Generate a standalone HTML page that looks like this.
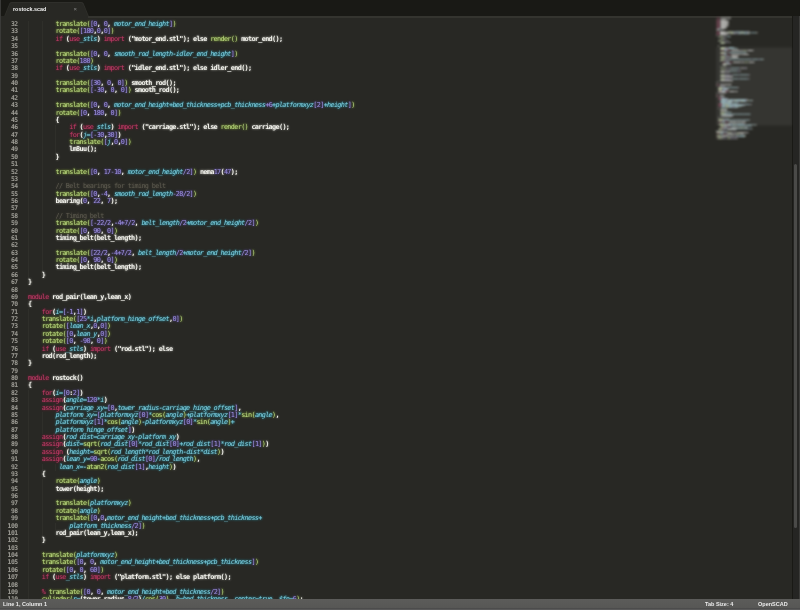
<!DOCTYPE html><html><head><meta charset="utf-8"><style>
*{margin:0;padding:0}
html,body{width:800px;height:610px;overflow:hidden;background:#191915}
body{position:relative;font-family:"Liberation Mono"}
#ed{position:absolute;left:0;top:16px;width:792px;height:583px;background:#282824;overflow:hidden}
#code{will-change:transform;font-weight:normal;letter-spacing:-0.6550px;position:absolute;left:27.7px;top:5.300000000000001px;font-size:6.8px;line-height:7.378px;white-space:pre;color:#f2f2ec}
#code2{will-change:transform;font-weight:normal;letter-spacing:-0.6550px;position:absolute;left:27.7px;top:5.300000000000001px;font-size:6.8px;line-height:7.378px;white-space:pre;color:#f2f2ec}
.glow{filter:blur(1px);opacity:1.0}
#nums{will-change:transform;font-weight:bold;letter-spacing:-0.4150px;position:absolute;left:0;width:17.8px;text-align:right;top:5.300000000000001px;font-size:6.4px;line-height:7.378px;white-space:pre;color:#9e9d96}
.fn{color:#bcdc84} .kw{color:#c03c68} .num{color:#9c90e0} .var{color:#80d0e0;font-style:italic} .txt{color:#f2f2ec} .com{color:#5e5b50} .str_{color:#f2f2ec}
.glow .fn{color:#a0c838} .glow .kw{color:#981840} .glow .num{color:#6850c8} .glow .var{color:#20b0d0} .glow .txt{color:#d8d8d0} .glow .com{color:#48463a} .glow .str_{color:#d8d8d0}
#code2 .txt,#code2 .str_{font-weight:bold}
#mm rect[class]{fill-opacity:1.0} .mfn{fill:#bcdc84} .mkw{fill:#c03c68} .mnum{fill:#9c90e0} .mvar{fill:#80d0e0} .mtxt{fill:#f2f2ec} .mcom{fill:#5e5b50} .mstr_{fill:#f2f2ec}

.guide{position:absolute;width:1px;background:#2f2f2a}
#status{will-change:transform;position:absolute;left:0;top:599px;width:800px;height:11px;background:linear-gradient(#5c5c5a 0%,#575755 80%,#4c4c4c 82%,#4c4c4c 88%,#5a5a5a 92%);color:#ececec;font-weight:bold;font-family:"Liberation Sans";font-size:5.5px;line-height:10.5px}
#sb{position:absolute;left:792.5px;top:16px;width:7.5px;height:583px;background:#252523;border-right:1.3px solid #3c3c3a;box-sizing:border-box}
#thumb{position:absolute;left:793.5px;top:164px;width:3.2px;height:364px;background:#4a4a48;border-radius:1.6px}
</style></head><body>
<svg style="position:absolute;left:0;top:0;will-change:transform" width="800" height="17"><path d="M4.5 17 L10 3 Q11 2.5 12 2.5 L81 2.5 Q82 2.5 83 3 L88.5 17 Z" fill="#282824"/><path d="M4.5 16.5 L10 3 Q11 2.5 12 2.5 L81 2.5 Q82 2.5 83 3 L88.5 16.5" fill="none" stroke="#363632" stroke-width="0.7"/>
<text x="13" y="11" font-family="Liberation Sans" font-weight="bold" font-size="5.4" fill="#f2f2f2">rostock.scad</text>
<text x="73.5" y="11" font-family="Liberation Sans" font-size="6" fill="#888">×</text></svg>
<div id="ed"><div style="position:absolute;left:88px;top:0;width:712px;height:1.5px;background:#34342f"></div><div class="guide" style="left:28.00px;top:5.30px;height:258.23px"></div><div class="guide" style="left:28.00px;top:293.04px;height:51.65px"></div><div class="guide" style="left:28.00px;top:374.20px;height:213.96px"></div><div class="guide" style="left:41.70px;top:5.30px;height:250.85px"></div><div class="guide" style="left:41.70px;top:396.33px;height:22.13px"></div><div class="guide" style="left:41.70px;top:447.98px;height:7.38px"></div><div class="guide" style="left:41.70px;top:462.74px;height:59.02px"></div><div class="guide" style="left:55.40px;top:108.59px;height:29.51px"></div><div class="guide" style="left:55.40px;top:447.98px;height:7.38px"></div><div class="guide" style="left:55.40px;top:507.00px;height:7.38px"></div><pre id="nums">32
33
34
35
36
37
38
39
40
41
42
43
44
45
46
47
48
49
50
51
52
53
54
55
56
57
58
59
60
61
62
63
64
65
66
67
68
69
70
71
72
73
74
75
76
77
78
79
80
81
82
83
84
85
86
87
88
89
90
91
92
93
94
95
96
97
98
99
100
101
102
103
104
105
106
107
108
109
110</pre><pre id="code" class="glow">        <span class="fn">translate</span><span class="fn">(</span><span class="num">[</span><span class="num">0</span><span class="txt">,</span> <span class="num">0</span><span class="txt">,</span> <span class="var">motor_end_height</span><span class="num">]</span><span class="fn">)</span>
        <span class="fn">rotate</span><span class="fn">(</span><span class="num">[</span><span class="num">180</span><span class="txt">,</span><span class="num">0</span><span class="txt">,</span><span class="num">0</span><span class="num">]</span><span class="fn">)</span>
        <span class="kw">if</span> <span class="txt">(</span><span class="kw">use</span><span class="var">_stls</span><span class="txt">)</span> <span class="kw">import</span> <span class="txt">(</span><span class="str_">&quot;motor_end.stl&quot;</span><span class="txt">)</span><span class="txt">;</span> <span class="txt">else</span> <span class="fn">render</span><span class="fn">(</span><span class="fn">)</span> <span class="txt">motor_end</span><span class="txt">(</span><span class="txt">)</span><span class="txt">;</span>

        <span class="fn">translate</span><span class="fn">(</span><span class="num">[</span><span class="num">0</span><span class="txt">,</span> <span class="num">0</span><span class="txt">,</span> <span class="var">smooth_rod_length</span><span class="var">-</span><span class="var">idler_end_height</span><span class="num">]</span><span class="fn">)</span>
        <span class="fn">rotate</span><span class="fn">(</span><span class="num">180</span><span class="fn">)</span>
        <span class="kw">if</span> <span class="txt">(</span><span class="kw">use</span><span class="var">_stls</span><span class="txt">)</span> <span class="kw">import</span> <span class="txt">(</span><span class="str_">&quot;idler_end.stl&quot;</span><span class="txt">)</span><span class="txt">;</span> <span class="txt">else</span> <span class="txt">idler_end</span><span class="txt">(</span><span class="txt">)</span><span class="txt">;</span>

        <span class="fn">translate</span><span class="fn">(</span><span class="num">[</span><span class="num">30</span><span class="txt">,</span> <span class="num">0</span><span class="txt">,</span> <span class="num">0</span><span class="num">]</span><span class="fn">)</span> <span class="txt">smooth_rod</span><span class="txt">(</span><span class="txt">)</span><span class="txt">;</span>
        <span class="fn">translate</span><span class="fn">(</span><span class="num">[</span><span class="num">-</span><span class="num">30</span><span class="txt">,</span> <span class="num">0</span><span class="txt">,</span> <span class="num">0</span><span class="num">]</span><span class="fn">)</span> <span class="txt">smooth_rod</span><span class="txt">(</span><span class="txt">)</span><span class="txt">;</span>

        <span class="fn">translate</span><span class="fn">(</span><span class="num">[</span><span class="num">0</span><span class="txt">,</span> <span class="num">0</span><span class="txt">,</span> <span class="var">motor_end_height</span><span class="var">+</span><span class="var">bed_thickness</span><span class="var">+</span><span class="var">pcb_thickness</span><span class="num">+</span><span class="num">6</span><span class="var">+</span><span class="var">platformxyz</span><span class="num">[</span><span class="num">2</span><span class="num">]</span><span class="var">+</span><span class="var">height</span><span class="num">]</span><span class="fn">)</span>
        <span class="fn">rotate</span><span class="fn">(</span><span class="num">[</span><span class="num">0</span><span class="txt">,</span> <span class="num">180</span><span class="txt">,</span> <span class="num">0</span><span class="num">]</span><span class="fn">)</span>
        <span class="txt">{</span>
            <span class="kw">if</span> <span class="txt">(</span><span class="kw">use</span><span class="var">_stls</span><span class="txt">)</span> <span class="kw">import</span> <span class="txt">(</span><span class="str_">&quot;carriage.stl&quot;</span><span class="txt">)</span><span class="txt">;</span> <span class="txt">else</span> <span class="fn">render</span><span class="fn">(</span><span class="fn">)</span> <span class="txt">carriage</span><span class="txt">(</span><span class="txt">)</span><span class="txt">;</span>
            <span class="kw">for</span><span class="txt">(</span><span class="var">j</span><span class="var">=</span><span class="num">[</span><span class="num">-</span><span class="num">30</span><span class="txt">,</span><span class="num">30</span><span class="num">]</span><span class="txt">)</span>
            <span class="fn">translate</span><span class="fn">(</span><span class="num">[</span><span class="var">j</span><span class="txt">,</span><span class="num">0</span><span class="txt">,</span><span class="num">0</span><span class="num">]</span><span class="fn">)</span>
            <span class="txt">lm8uu</span><span class="txt">(</span><span class="txt">)</span><span class="txt">;</span>
        <span class="txt">}</span>

        <span class="fn">translate</span><span class="fn">(</span><span class="num">[</span><span class="num">0</span><span class="txt">,</span> <span class="num">17</span><span class="num">-</span><span class="num">10</span><span class="txt">,</span> <span class="var">motor_end_height</span><span class="num">/</span><span class="num">2</span><span class="num">]</span><span class="fn">)</span> <span class="txt">nema</span><span class="num">17</span><span class="txt">(</span><span class="num">47</span><span class="txt">)</span><span class="txt">;</span>

        <span class="com">// Belt bearings for timing belt</span>
        <span class="fn">translate</span><span class="fn">(</span><span class="num">[</span><span class="num">0</span><span class="txt">,</span><span class="num">-</span><span class="num">4</span><span class="txt">,</span> <span class="var">smooth_rod_length</span><span class="num">-</span><span class="num">28</span><span class="num">/</span><span class="num">2</span><span class="num">]</span><span class="fn">)</span>
        <span class="txt">bearing</span><span class="txt">(</span><span class="num">0</span><span class="txt">,</span> <span class="num">22</span><span class="txt">,</span> <span class="num">7</span><span class="txt">)</span><span class="txt">;</span>

        <span class="com">// Timing belt</span>
        <span class="fn">translate</span><span class="fn">(</span><span class="num">[</span><span class="num">-</span><span class="num">22</span><span class="num">/</span><span class="num">2</span><span class="txt">,</span><span class="num">-</span><span class="num">4</span><span class="num">+</span><span class="num">7</span><span class="num">/</span><span class="num">2</span><span class="txt">,</span> <span class="var">belt_length</span><span class="num">/</span><span class="num">2</span><span class="var">+</span><span class="var">motor_end_height</span><span class="num">/</span><span class="num">2</span><span class="num">]</span><span class="fn">)</span>
        <span class="fn">rotate</span><span class="fn">(</span><span class="num">[</span><span class="num">0</span><span class="txt">,</span> <span class="num">90</span><span class="txt">,</span> <span class="num">0</span><span class="num">]</span><span class="fn">)</span>
        <span class="txt">timing_belt</span><span class="txt">(</span><span class="txt">belt_length</span><span class="txt">)</span><span class="txt">;</span>

        <span class="fn">translate</span><span class="fn">(</span><span class="num">[</span><span class="num">22</span><span class="num">/</span><span class="num">2</span><span class="txt">,</span><span class="num">-</span><span class="num">4</span><span class="num">+</span><span class="num">7</span><span class="num">/</span><span class="num">2</span><span class="txt">,</span> <span class="var">belt_length</span><span class="num">/</span><span class="num">2</span><span class="var">+</span><span class="var">motor_end_height</span><span class="num">/</span><span class="num">2</span><span class="num">]</span><span class="fn">)</span>
        <span class="fn">rotate</span><span class="fn">(</span><span class="num">[</span><span class="num">0</span><span class="txt">,</span> <span class="num">90</span><span class="txt">,</span> <span class="num">0</span><span class="num">]</span><span class="fn">)</span>
        <span class="txt">timing_belt</span><span class="txt">(</span><span class="txt">belt_length</span><span class="txt">)</span><span class="txt">;</span>
    <span class="txt">}</span>
<span class="txt">}</span>

<span class="kw">module</span> <span class="txt">rod_pair</span><span class="txt">(</span><span class="txt">lean_y</span><span class="txt">,</span><span class="txt">lean_x</span><span class="txt">)</span>
<span class="txt">{</span>
    <span class="kw">for</span><span class="txt">(</span><span class="var">i</span><span class="var">=</span><span class="num">[</span><span class="num">-</span><span class="num">1</span><span class="txt">,</span><span class="num">1</span><span class="num">]</span><span class="txt">)</span>
    <span class="fn">translate</span><span class="fn">(</span><span class="num">[</span><span class="num">25</span><span class="var">*</span><span class="var">i</span><span class="txt">,</span><span class="var">platform_hinge_offset</span><span class="txt">,</span><span class="num">0</span><span class="num">]</span><span class="fn">)</span>
    <span class="fn">rotate</span><span class="fn">(</span><span class="num">[</span><span class="var">lean_x</span><span class="txt">,</span><span class="num">0</span><span class="txt">,</span><span class="num">0</span><span class="num">]</span><span class="fn">)</span>
    <span class="fn">rotate</span><span class="fn">(</span><span class="num">[</span><span class="num">0</span><span class="txt">,</span><span class="var">lean_y</span><span class="txt">,</span><span class="num">0</span><span class="num">]</span><span class="fn">)</span>
    <span class="fn">rotate</span><span class="fn">(</span><span class="num">[</span><span class="num">0</span><span class="txt">,</span> <span class="num">-</span><span class="num">90</span><span class="txt">,</span> <span class="num">0</span><span class="num">]</span><span class="fn">)</span>
    <span class="kw">if</span> <span class="txt">(</span><span class="kw">use</span><span class="var">_stls</span><span class="txt">)</span> <span class="kw">import</span> <span class="txt">(</span><span class="str_">&quot;rod.stl&quot;</span><span class="txt">)</span><span class="txt">;</span> <span class="txt">else</span>
    <span class="txt">rod</span><span class="txt">(</span><span class="txt">rod_length</span><span class="txt">)</span><span class="txt">;</span>
<span class="txt">}</span>

<span class="kw">module</span> <span class="txt">rostock</span><span class="txt">(</span><span class="txt">)</span>
<span class="txt">{</span>
    <span class="kw">for</span><span class="txt">(</span><span class="var">i</span><span class="var">=</span><span class="num">[</span><span class="num">0</span><span class="txt">:</span><span class="num">2</span><span class="num">]</span><span class="txt">)</span>
    <span class="kw">assign</span><span class="txt">(</span><span class="var">angle</span><span class="var">=</span><span class="num">120</span><span class="var">*</span><span class="var">i</span><span class="txt">)</span>
    <span class="kw">assign</span><span class="txt">(</span><span class="var">carriage_xy</span><span class="var">=</span><span class="num">[</span><span class="num">0</span><span class="txt">,</span><span class="var">tower_radius</span><span class="var">-</span><span class="var">carriage_hinge_offset</span><span class="num">]</span><span class="txt">,</span>
        <span class="var">platform_xy</span><span class="var">=</span><span class="num">[</span><span class="var">platformxyz</span><span class="num">[</span><span class="num">0</span><span class="num">]</span><span class="var">*</span><span class="fn">cos</span><span class="fn">(</span><span class="var">angle</span><span class="fn">)</span><span class="var">+</span><span class="var">platformxyz</span><span class="num">[</span><span class="num">1</span><span class="num">]</span><span class="var">*</span><span class="fn">sin</span><span class="fn">(</span><span class="var">angle</span><span class="fn">)</span><span class="txt">,</span>
        <span class="var">platformxyz</span><span class="num">[</span><span class="num">1</span><span class="num">]</span><span class="var">*</span><span class="fn">cos</span><span class="fn">(</span><span class="var">angle</span><span class="fn">)</span><span class="var">-</span><span class="var">platformxyz</span><span class="num">[</span><span class="num">0</span><span class="num">]</span><span class="var">*</span><span class="fn">sin</span><span class="fn">(</span><span class="var">angle</span><span class="fn">)</span><span class="var">+</span>
        <span class="var">platform_hinge_offset</span><span class="num">]</span><span class="txt">)</span>
    <span class="kw">assign</span><span class="txt">(</span><span class="var">rod_dist</span><span class="var">=</span><span class="var">carriage_xy</span><span class="var">-</span><span class="var">platform_xy</span><span class="txt">)</span>
    <span class="kw">assign</span><span class="txt">(</span><span class="var">dist</span><span class="var">=</span><span class="fn">sqrt</span><span class="fn">(</span><span class="var">rod_dist</span><span class="num">[</span><span class="num">0</span><span class="num">]</span><span class="var">*</span><span class="var">rod_dist</span><span class="num">[</span><span class="num">0</span><span class="num">]</span><span class="var">+</span><span class="var">rod_dist</span><span class="num">[</span><span class="num">1</span><span class="num">]</span><span class="var">*</span><span class="var">rod_dist</span><span class="num">[</span><span class="num">1</span><span class="num">]</span><span class="fn">)</span><span class="txt">)</span>
    <span class="kw">assign</span> <span class="txt">(</span><span class="var">height</span><span class="var">=</span><span class="fn">sqrt</span><span class="fn">(</span><span class="var">rod_length</span><span class="var">*</span><span class="var">rod_length</span><span class="var">-</span><span class="var">dist</span><span class="var">*</span><span class="var">dist</span><span class="fn">)</span><span class="txt">)</span>
    <span class="kw">assign</span><span class="txt">(</span><span class="var">lean_y</span><span class="var">=</span><span class="num">90</span><span class="var">-</span><span class="fn">acos</span><span class="fn">(</span><span class="var">rod_dist</span><span class="num">[</span><span class="num">0</span><span class="num">]</span><span class="var">/</span><span class="var">rod_length</span><span class="fn">)</span><span class="txt">,</span>
         <span class="var">lean_x</span><span class="var">=</span><span class="var">-</span><span class="fn">atan2</span><span class="fn">(</span><span class="var">rod_dist</span><span class="num">[</span><span class="num">1</span><span class="num">]</span><span class="txt">,</span><span class="var">height</span><span class="fn">)</span><span class="txt">)</span>
    <span class="txt">{</span>
        <span class="fn">rotate</span><span class="fn">(</span><span class="var">angle</span><span class="fn">)</span>
        <span class="txt">tower</span><span class="txt">(</span><span class="txt">height</span><span class="txt">)</span><span class="txt">;</span>

        <span class="fn">translate</span><span class="fn">(</span><span class="var">platformxyz</span><span class="fn">)</span>
        <span class="fn">rotate</span><span class="fn">(</span><span class="var">angle</span><span class="fn">)</span>
        <span class="fn">translate</span><span class="fn">(</span><span class="num">[</span><span class="num">0</span><span class="txt">,</span><span class="num">0</span><span class="txt">,</span><span class="var">motor_end_height</span><span class="var">+</span><span class="var">bed_thickness</span><span class="var">+</span><span class="var">pcb_thickness</span><span class="var">+</span>
            <span class="var">platform_thickness</span><span class="num">/</span><span class="num">2</span><span class="num">]</span><span class="fn">)</span>
        <span class="txt">rod_pair</span><span class="txt">(</span><span class="txt">lean_y</span><span class="txt">,</span><span class="txt">lean_x</span><span class="txt">)</span><span class="txt">;</span>
    <span class="txt">}</span>

    <span class="fn">translate</span><span class="fn">(</span><span class="var">platformxyz</span><span class="fn">)</span>
    <span class="fn">translate</span><span class="fn">(</span><span class="num">[</span><span class="num">0</span><span class="txt">,</span> <span class="num">0</span><span class="txt">,</span> <span class="var">motor_end_height</span><span class="var">+</span><span class="var">bed_thickness</span><span class="var">+</span><span class="var">pcb_thickness</span><span class="num">]</span><span class="fn">)</span>
    <span class="fn">rotate</span><span class="fn">(</span><span class="num">[</span><span class="num">0</span><span class="txt">,</span> <span class="num">0</span><span class="txt">,</span> <span class="num">60</span><span class="num">]</span><span class="fn">)</span>
    <span class="kw">if</span> <span class="txt">(</span><span class="kw">use</span><span class="var">_stls</span><span class="txt">)</span> <span class="kw">import</span> <span class="txt">(</span><span class="str_">&quot;platform.stl&quot;</span><span class="txt">)</span><span class="txt">;</span> <span class="txt">else</span> <span class="txt">platform</span><span class="txt">(</span><span class="txt">)</span><span class="txt">;</span>

    <span class="kw">%</span> <span class="fn">translate</span><span class="fn">(</span><span class="num">[</span><span class="num">0</span><span class="txt">,</span> <span class="num">0</span><span class="txt">,</span> <span class="var">motor_end_height</span><span class="var">+</span><span class="var">bed_thickness</span><span class="num">/</span><span class="num">2</span><span class="num">]</span><span class="fn">)</span>
    <span class="fn">cylinder</span><span class="fn">(</span><span class="var">r</span><span class="var">=</span><span class="txt">(</span><span class="txt">tower_radius</span><span class="num">-</span><span class="num">8</span><span class="num">/</span><span class="num">2</span><span class="txt">)</span><span class="var">/</span><span class="fn">cos</span><span class="fn">(</span><span class="num">30</span><span class="fn">)</span><span class="txt">,</span> <span class="var">h</span><span class="var">=</span><span class="var">bed_thickness</span><span class="txt">,</span> <span class="var">center</span><span class="var">=</span><span class="var">true</span><span class="txt">,</span> <span class="var">$fn</span><span class="var">=</span><span class="num">6</span><span class="fn">)</span><span class="txt">;</span></pre><pre id="code2">        <span class="fn">translate</span><span class="fn">(</span><span class="num">[</span><span class="num">0</span><span class="txt">,</span> <span class="num">0</span><span class="txt">,</span> <span class="var">motor_end_height</span><span class="num">]</span><span class="fn">)</span>
        <span class="fn">rotate</span><span class="fn">(</span><span class="num">[</span><span class="num">180</span><span class="txt">,</span><span class="num">0</span><span class="txt">,</span><span class="num">0</span><span class="num">]</span><span class="fn">)</span>
        <span class="kw">if</span> <span class="txt">(</span><span class="kw">use</span><span class="var">_stls</span><span class="txt">)</span> <span class="kw">import</span> <span class="txt">(</span><span class="str_">&quot;motor_end.stl&quot;</span><span class="txt">)</span><span class="txt">;</span> <span class="txt">else</span> <span class="fn">render</span><span class="fn">(</span><span class="fn">)</span> <span class="txt">motor_end</span><span class="txt">(</span><span class="txt">)</span><span class="txt">;</span>

        <span class="fn">translate</span><span class="fn">(</span><span class="num">[</span><span class="num">0</span><span class="txt">,</span> <span class="num">0</span><span class="txt">,</span> <span class="var">smooth_rod_length</span><span class="var">-</span><span class="var">idler_end_height</span><span class="num">]</span><span class="fn">)</span>
        <span class="fn">rotate</span><span class="fn">(</span><span class="num">180</span><span class="fn">)</span>
        <span class="kw">if</span> <span class="txt">(</span><span class="kw">use</span><span class="var">_stls</span><span class="txt">)</span> <span class="kw">import</span> <span class="txt">(</span><span class="str_">&quot;idler_end.stl&quot;</span><span class="txt">)</span><span class="txt">;</span> <span class="txt">else</span> <span class="txt">idler_end</span><span class="txt">(</span><span class="txt">)</span><span class="txt">;</span>

        <span class="fn">translate</span><span class="fn">(</span><span class="num">[</span><span class="num">30</span><span class="txt">,</span> <span class="num">0</span><span class="txt">,</span> <span class="num">0</span><span class="num">]</span><span class="fn">)</span> <span class="txt">smooth_rod</span><span class="txt">(</span><span class="txt">)</span><span class="txt">;</span>
        <span class="fn">translate</span><span class="fn">(</span><span class="num">[</span><span class="num">-</span><span class="num">30</span><span class="txt">,</span> <span class="num">0</span><span class="txt">,</span> <span class="num">0</span><span class="num">]</span><span class="fn">)</span> <span class="txt">smooth_rod</span><span class="txt">(</span><span class="txt">)</span><span class="txt">;</span>

        <span class="fn">translate</span><span class="fn">(</span><span class="num">[</span><span class="num">0</span><span class="txt">,</span> <span class="num">0</span><span class="txt">,</span> <span class="var">motor_end_height</span><span class="var">+</span><span class="var">bed_thickness</span><span class="var">+</span><span class="var">pcb_thickness</span><span class="num">+</span><span class="num">6</span><span class="var">+</span><span class="var">platformxyz</span><span class="num">[</span><span class="num">2</span><span class="num">]</span><span class="var">+</span><span class="var">height</span><span class="num">]</span><span class="fn">)</span>
        <span class="fn">rotate</span><span class="fn">(</span><span class="num">[</span><span class="num">0</span><span class="txt">,</span> <span class="num">180</span><span class="txt">,</span> <span class="num">0</span><span class="num">]</span><span class="fn">)</span>
        <span class="txt">{</span>
            <span class="kw">if</span> <span class="txt">(</span><span class="kw">use</span><span class="var">_stls</span><span class="txt">)</span> <span class="kw">import</span> <span class="txt">(</span><span class="str_">&quot;carriage.stl&quot;</span><span class="txt">)</span><span class="txt">;</span> <span class="txt">else</span> <span class="fn">render</span><span class="fn">(</span><span class="fn">)</span> <span class="txt">carriage</span><span class="txt">(</span><span class="txt">)</span><span class="txt">;</span>
            <span class="kw">for</span><span class="txt">(</span><span class="var">j</span><span class="var">=</span><span class="num">[</span><span class="num">-</span><span class="num">30</span><span class="txt">,</span><span class="num">30</span><span class="num">]</span><span class="txt">)</span>
            <span class="fn">translate</span><span class="fn">(</span><span class="num">[</span><span class="var">j</span><span class="txt">,</span><span class="num">0</span><span class="txt">,</span><span class="num">0</span><span class="num">]</span><span class="fn">)</span>
            <span class="txt">lm8uu</span><span class="txt">(</span><span class="txt">)</span><span class="txt">;</span>
        <span class="txt">}</span>

        <span class="fn">translate</span><span class="fn">(</span><span class="num">[</span><span class="num">0</span><span class="txt">,</span> <span class="num">17</span><span class="num">-</span><span class="num">10</span><span class="txt">,</span> <span class="var">motor_end_height</span><span class="num">/</span><span class="num">2</span><span class="num">]</span><span class="fn">)</span> <span class="txt">nema</span><span class="num">17</span><span class="txt">(</span><span class="num">47</span><span class="txt">)</span><span class="txt">;</span>

        <span class="com">// Belt bearings for timing belt</span>
        <span class="fn">translate</span><span class="fn">(</span><span class="num">[</span><span class="num">0</span><span class="txt">,</span><span class="num">-</span><span class="num">4</span><span class="txt">,</span> <span class="var">smooth_rod_length</span><span class="num">-</span><span class="num">28</span><span class="num">/</span><span class="num">2</span><span class="num">]</span><span class="fn">)</span>
        <span class="txt">bearing</span><span class="txt">(</span><span class="num">0</span><span class="txt">,</span> <span class="num">22</span><span class="txt">,</span> <span class="num">7</span><span class="txt">)</span><span class="txt">;</span>

        <span class="com">// Timing belt</span>
        <span class="fn">translate</span><span class="fn">(</span><span class="num">[</span><span class="num">-</span><span class="num">22</span><span class="num">/</span><span class="num">2</span><span class="txt">,</span><span class="num">-</span><span class="num">4</span><span class="num">+</span><span class="num">7</span><span class="num">/</span><span class="num">2</span><span class="txt">,</span> <span class="var">belt_length</span><span class="num">/</span><span class="num">2</span><span class="var">+</span><span class="var">motor_end_height</span><span class="num">/</span><span class="num">2</span><span class="num">]</span><span class="fn">)</span>
        <span class="fn">rotate</span><span class="fn">(</span><span class="num">[</span><span class="num">0</span><span class="txt">,</span> <span class="num">90</span><span class="txt">,</span> <span class="num">0</span><span class="num">]</span><span class="fn">)</span>
        <span class="txt">timing_belt</span><span class="txt">(</span><span class="txt">belt_length</span><span class="txt">)</span><span class="txt">;</span>

        <span class="fn">translate</span><span class="fn">(</span><span class="num">[</span><span class="num">22</span><span class="num">/</span><span class="num">2</span><span class="txt">,</span><span class="num">-</span><span class="num">4</span><span class="num">+</span><span class="num">7</span><span class="num">/</span><span class="num">2</span><span class="txt">,</span> <span class="var">belt_length</span><span class="num">/</span><span class="num">2</span><span class="var">+</span><span class="var">motor_end_height</span><span class="num">/</span><span class="num">2</span><span class="num">]</span><span class="fn">)</span>
        <span class="fn">rotate</span><span class="fn">(</span><span class="num">[</span><span class="num">0</span><span class="txt">,</span> <span class="num">90</span><span class="txt">,</span> <span class="num">0</span><span class="num">]</span><span class="fn">)</span>
        <span class="txt">timing_belt</span><span class="txt">(</span><span class="txt">belt_length</span><span class="txt">)</span><span class="txt">;</span>
    <span class="txt">}</span>
<span class="txt">}</span>

<span class="kw">module</span> <span class="txt">rod_pair</span><span class="txt">(</span><span class="txt">lean_y</span><span class="txt">,</span><span class="txt">lean_x</span><span class="txt">)</span>
<span class="txt">{</span>
    <span class="kw">for</span><span class="txt">(</span><span class="var">i</span><span class="var">=</span><span class="num">[</span><span class="num">-</span><span class="num">1</span><span class="txt">,</span><span class="num">1</span><span class="num">]</span><span class="txt">)</span>
    <span class="fn">translate</span><span class="fn">(</span><span class="num">[</span><span class="num">25</span><span class="var">*</span><span class="var">i</span><span class="txt">,</span><span class="var">platform_hinge_offset</span><span class="txt">,</span><span class="num">0</span><span class="num">]</span><span class="fn">)</span>
    <span class="fn">rotate</span><span class="fn">(</span><span class="num">[</span><span class="var">lean_x</span><span class="txt">,</span><span class="num">0</span><span class="txt">,</span><span class="num">0</span><span class="num">]</span><span class="fn">)</span>
    <span class="fn">rotate</span><span class="fn">(</span><span class="num">[</span><span class="num">0</span><span class="txt">,</span><span class="var">lean_y</span><span class="txt">,</span><span class="num">0</span><span class="num">]</span><span class="fn">)</span>
    <span class="fn">rotate</span><span class="fn">(</span><span class="num">[</span><span class="num">0</span><span class="txt">,</span> <span class="num">-</span><span class="num">90</span><span class="txt">,</span> <span class="num">0</span><span class="num">]</span><span class="fn">)</span>
    <span class="kw">if</span> <span class="txt">(</span><span class="kw">use</span><span class="var">_stls</span><span class="txt">)</span> <span class="kw">import</span> <span class="txt">(</span><span class="str_">&quot;rod.stl&quot;</span><span class="txt">)</span><span class="txt">;</span> <span class="txt">else</span>
    <span class="txt">rod</span><span class="txt">(</span><span class="txt">rod_length</span><span class="txt">)</span><span class="txt">;</span>
<span class="txt">}</span>

<span class="kw">module</span> <span class="txt">rostock</span><span class="txt">(</span><span class="txt">)</span>
<span class="txt">{</span>
    <span class="kw">for</span><span class="txt">(</span><span class="var">i</span><span class="var">=</span><span class="num">[</span><span class="num">0</span><span class="txt">:</span><span class="num">2</span><span class="num">]</span><span class="txt">)</span>
    <span class="kw">assign</span><span class="txt">(</span><span class="var">angle</span><span class="var">=</span><span class="num">120</span><span class="var">*</span><span class="var">i</span><span class="txt">)</span>
    <span class="kw">assign</span><span class="txt">(</span><span class="var">carriage_xy</span><span class="var">=</span><span class="num">[</span><span class="num">0</span><span class="txt">,</span><span class="var">tower_radius</span><span class="var">-</span><span class="var">carriage_hinge_offset</span><span class="num">]</span><span class="txt">,</span>
        <span class="var">platform_xy</span><span class="var">=</span><span class="num">[</span><span class="var">platformxyz</span><span class="num">[</span><span class="num">0</span><span class="num">]</span><span class="var">*</span><span class="fn">cos</span><span class="fn">(</span><span class="var">angle</span><span class="fn">)</span><span class="var">+</span><span class="var">platformxyz</span><span class="num">[</span><span class="num">1</span><span class="num">]</span><span class="var">*</span><span class="fn">sin</span><span class="fn">(</span><span class="var">angle</span><span class="fn">)</span><span class="txt">,</span>
        <span class="var">platformxyz</span><span class="num">[</span><span class="num">1</span><span class="num">]</span><span class="var">*</span><span class="fn">cos</span><span class="fn">(</span><span class="var">angle</span><span class="fn">)</span><span class="var">-</span><span class="var">platformxyz</span><span class="num">[</span><span class="num">0</span><span class="num">]</span><span class="var">*</span><span class="fn">sin</span><span class="fn">(</span><span class="var">angle</span><span class="fn">)</span><span class="var">+</span>
        <span class="var">platform_hinge_offset</span><span class="num">]</span><span class="txt">)</span>
    <span class="kw">assign</span><span class="txt">(</span><span class="var">rod_dist</span><span class="var">=</span><span class="var">carriage_xy</span><span class="var">-</span><span class="var">platform_xy</span><span class="txt">)</span>
    <span class="kw">assign</span><span class="txt">(</span><span class="var">dist</span><span class="var">=</span><span class="fn">sqrt</span><span class="fn">(</span><span class="var">rod_dist</span><span class="num">[</span><span class="num">0</span><span class="num">]</span><span class="var">*</span><span class="var">rod_dist</span><span class="num">[</span><span class="num">0</span><span class="num">]</span><span class="var">+</span><span class="var">rod_dist</span><span class="num">[</span><span class="num">1</span><span class="num">]</span><span class="var">*</span><span class="var">rod_dist</span><span class="num">[</span><span class="num">1</span><span class="num">]</span><span class="fn">)</span><span class="txt">)</span>
    <span class="kw">assign</span> <span class="txt">(</span><span class="var">height</span><span class="var">=</span><span class="fn">sqrt</span><span class="fn">(</span><span class="var">rod_length</span><span class="var">*</span><span class="var">rod_length</span><span class="var">-</span><span class="var">dist</span><span class="var">*</span><span class="var">dist</span><span class="fn">)</span><span class="txt">)</span>
    <span class="kw">assign</span><span class="txt">(</span><span class="var">lean_y</span><span class="var">=</span><span class="num">90</span><span class="var">-</span><span class="fn">acos</span><span class="fn">(</span><span class="var">rod_dist</span><span class="num">[</span><span class="num">0</span><span class="num">]</span><span class="var">/</span><span class="var">rod_length</span><span class="fn">)</span><span class="txt">,</span>
         <span class="var">lean_x</span><span class="var">=</span><span class="var">-</span><span class="fn">atan2</span><span class="fn">(</span><span class="var">rod_dist</span><span class="num">[</span><span class="num">1</span><span class="num">]</span><span class="txt">,</span><span class="var">height</span><span class="fn">)</span><span class="txt">)</span>
    <span class="txt">{</span>
        <span class="fn">rotate</span><span class="fn">(</span><span class="var">angle</span><span class="fn">)</span>
        <span class="txt">tower</span><span class="txt">(</span><span class="txt">height</span><span class="txt">)</span><span class="txt">;</span>

        <span class="fn">translate</span><span class="fn">(</span><span class="var">platformxyz</span><span class="fn">)</span>
        <span class="fn">rotate</span><span class="fn">(</span><span class="var">angle</span><span class="fn">)</span>
        <span class="fn">translate</span><span class="fn">(</span><span class="num">[</span><span class="num">0</span><span class="txt">,</span><span class="num">0</span><span class="txt">,</span><span class="var">motor_end_height</span><span class="var">+</span><span class="var">bed_thickness</span><span class="var">+</span><span class="var">pcb_thickness</span><span class="var">+</span>
            <span class="var">platform_thickness</span><span class="num">/</span><span class="num">2</span><span class="num">]</span><span class="fn">)</span>
        <span class="txt">rod_pair</span><span class="txt">(</span><span class="txt">lean_y</span><span class="txt">,</span><span class="txt">lean_x</span><span class="txt">)</span><span class="txt">;</span>
    <span class="txt">}</span>

    <span class="fn">translate</span><span class="fn">(</span><span class="var">platformxyz</span><span class="fn">)</span>
    <span class="fn">translate</span><span class="fn">(</span><span class="num">[</span><span class="num">0</span><span class="txt">,</span> <span class="num">0</span><span class="txt">,</span> <span class="var">motor_end_height</span><span class="var">+</span><span class="var">bed_thickness</span><span class="var">+</span><span class="var">pcb_thickness</span><span class="num">]</span><span class="fn">)</span>
    <span class="fn">rotate</span><span class="fn">(</span><span class="num">[</span><span class="num">0</span><span class="txt">,</span> <span class="num">0</span><span class="txt">,</span> <span class="num">60</span><span class="num">]</span><span class="fn">)</span>
    <span class="kw">if</span> <span class="txt">(</span><span class="kw">use</span><span class="var">_stls</span><span class="txt">)</span> <span class="kw">import</span> <span class="txt">(</span><span class="str_">&quot;platform.stl&quot;</span><span class="txt">)</span><span class="txt">;</span> <span class="txt">else</span> <span class="txt">platform</span><span class="txt">(</span><span class="txt">)</span><span class="txt">;</span>

    <span class="kw">%</span> <span class="fn">translate</span><span class="fn">(</span><span class="num">[</span><span class="num">0</span><span class="txt">,</span> <span class="num">0</span><span class="txt">,</span> <span class="var">motor_end_height</span><span class="var">+</span><span class="var">bed_thickness</span><span class="num">/</span><span class="num">2</span><span class="num">]</span><span class="fn">)</span>
    <span class="fn">cylinder</span><span class="fn">(</span><span class="var">r</span><span class="var">=</span><span class="txt">(</span><span class="txt">tower_radius</span><span class="num">-</span><span class="num">8</span><span class="num">/</span><span class="num">2</span><span class="txt">)</span><span class="var">/</span><span class="fn">cos</span><span class="fn">(</span><span class="num">30</span><span class="fn">)</span><span class="txt">,</span> <span class="var">h</span><span class="var">=</span><span class="var">bed_thickness</span><span class="txt">,</span> <span class="var">center</span><span class="var">=</span><span class="var">true</span><span class="txt">,</span> <span class="var">$fn</span><span class="var">=</span><span class="num">6</span><span class="fn">)</span><span class="txt">;</span></pre></div>
<svg id="mm" width="80" height="140" viewBox="712 0 80 140" style="position:absolute;left:712px;top:0;filter:blur(0.8px) saturate(0.4)"><rect x="716" y="47.5" width="76" height="78" style="fill:#ffffff;fill-opacity:0.06"/><rect class="mkw" x="716.50" y="17.70" width="3.50" height="0.80"/><rect class="mtxt" x="720.50" y="17.70" width="0.50" height="0.80"/><rect class="mtxt" x="721.00" y="17.70" width="6.50" height="0.80"/><rect class="mtxt" x="727.50" y="17.70" width="0.50" height="0.80"/><rect class="mtxt" x="728.00" y="17.70" width="2.00" height="0.80"/><rect class="mtxt" x="730.00" y="17.70" width="0.50" height="0.80"/><rect class="mtxt" x="730.50" y="17.70" width="0.50" height="0.80"/><rect class="mkw" x="716.50" y="19.66" width="3.50" height="0.80"/><rect class="mtxt" x="720.50" y="19.66" width="0.50" height="0.80"/><rect class="mtxt" x="721.00" y="19.66" width="1.50" height="0.80"/><rect class="mtxt" x="722.50" y="19.66" width="0.50" height="0.80"/><rect class="mtxt" x="723.00" y="19.66" width="2.00" height="0.80"/><rect class="mtxt" x="725.00" y="19.66" width="0.50" height="0.80"/><rect class="mtxt" x="725.50" y="19.66" width="0.50" height="0.80"/><rect class="mkw" x="716.50" y="20.64" width="3.50" height="0.80"/><rect class="mtxt" x="720.50" y="20.64" width="0.50" height="0.80"/><rect class="mtxt" x="721.00" y="20.64" width="4.00" height="0.80"/><rect class="mtxt" x="725.00" y="20.64" width="0.50" height="0.80"/><rect class="mtxt" x="725.50" y="20.64" width="2.00" height="0.80"/><rect class="mtxt" x="727.50" y="20.64" width="0.50" height="0.80"/><rect class="mtxt" x="728.00" y="20.64" width="0.50" height="0.80"/><rect class="mkw" x="716.50" y="21.62" width="3.50" height="0.80"/><rect class="mtxt" x="720.50" y="21.62" width="0.50" height="0.80"/><rect class="mtxt" x="721.00" y="21.62" width="4.50" height="0.80"/><rect class="mtxt" x="725.50" y="21.62" width="0.50" height="0.80"/><rect class="mtxt" x="726.00" y="21.62" width="2.00" height="0.80"/><rect class="mtxt" x="728.00" y="21.62" width="0.50" height="0.80"/><rect class="mtxt" x="728.50" y="21.62" width="0.50" height="0.80"/><rect class="mkw" x="716.50" y="22.60" width="3.50" height="0.80"/><rect class="mtxt" x="720.50" y="22.60" width="0.50" height="0.80"/><rect class="mtxt" x="721.00" y="22.60" width="2.50" height="0.80"/><rect class="mtxt" x="723.50" y="22.60" width="0.50" height="0.80"/><rect class="mtxt" x="724.00" y="22.60" width="2.00" height="0.80"/><rect class="mtxt" x="726.00" y="22.60" width="0.50" height="0.80"/><rect class="mtxt" x="726.50" y="22.60" width="0.50" height="0.80"/><rect class="mkw" x="716.50" y="23.58" width="3.50" height="0.80"/><rect class="mtxt" x="720.50" y="23.58" width="0.50" height="0.80"/><rect class="mtxt" x="721.00" y="23.58" width="4.50" height="0.80"/><rect class="mtxt" x="725.50" y="23.58" width="0.50" height="0.80"/><rect class="mtxt" x="726.00" y="23.58" width="2.00" height="0.80"/><rect class="mtxt" x="728.00" y="23.58" width="0.50" height="0.80"/><rect class="mtxt" x="728.50" y="23.58" width="0.50" height="0.80"/><rect class="mkw" x="716.50" y="24.56" width="3.50" height="0.80"/><rect class="mtxt" x="720.50" y="24.56" width="0.50" height="0.80"/><rect class="mtxt" x="721.00" y="24.56" width="3.00" height="0.80"/><rect class="mtxt" x="724.00" y="24.56" width="0.50" height="0.80"/><rect class="mtxt" x="724.50" y="24.56" width="2.00" height="0.80"/><rect class="mtxt" x="726.50" y="24.56" width="0.50" height="0.80"/><rect class="mtxt" x="727.00" y="24.56" width="0.50" height="0.80"/><rect class="mkw" x="716.50" y="25.54" width="3.50" height="0.80"/><rect class="mtxt" x="720.50" y="25.54" width="0.50" height="0.80"/><rect class="mtxt" x="721.00" y="25.54" width="4.00" height="0.80"/><rect class="mtxt" x="725.00" y="25.54" width="0.50" height="0.80"/><rect class="mtxt" x="725.50" y="25.54" width="2.00" height="0.80"/><rect class="mtxt" x="727.50" y="25.54" width="0.50" height="0.80"/><rect class="mtxt" x="728.00" y="25.54" width="0.50" height="0.80"/><rect class="mkw" x="716.50" y="26.52" width="3.50" height="0.80"/><rect class="mtxt" x="720.50" y="26.52" width="0.50" height="0.80"/><rect class="mtxt" x="721.00" y="26.52" width="1.50" height="0.80"/><rect class="mtxt" x="722.50" y="26.52" width="0.50" height="0.80"/><rect class="mtxt" x="723.00" y="26.52" width="2.00" height="0.80"/><rect class="mtxt" x="725.00" y="26.52" width="0.50" height="0.80"/><rect class="mtxt" x="725.50" y="26.52" width="0.50" height="0.80"/><rect class="mkw" x="716.50" y="27.50" width="3.50" height="0.80"/><rect class="mtxt" x="720.50" y="27.50" width="0.50" height="0.80"/><rect class="mtxt" x="721.00" y="27.50" width="2.50" height="0.80"/><rect class="mtxt" x="723.50" y="27.50" width="0.50" height="0.80"/><rect class="mtxt" x="724.00" y="27.50" width="2.00" height="0.80"/><rect class="mtxt" x="726.00" y="27.50" width="0.50" height="0.80"/><rect class="mtxt" x="726.50" y="27.50" width="0.50" height="0.80"/><rect class="mkw" x="716.50" y="28.48" width="1.50" height="0.80"/><rect class="mvar" x="718.00" y="28.48" width="2.50" height="0.80"/><rect class="mtxt" x="721.00" y="28.48" width="0.50" height="0.80"/><rect class="mtxt" x="722.00" y="28.48" width="2.00" height="0.80"/><rect class="mtxt" x="724.00" y="28.48" width="0.50" height="0.80"/><rect class="mtxt" x="716.50" y="29.46" width="3.00" height="0.80"/><rect class="mtxt" x="720.00" y="29.46" width="0.50" height="0.80"/><rect class="mnum" x="721.00" y="29.46" width="0.50" height="0.80"/><rect class="mtxt" x="721.50" y="29.46" width="0.50" height="0.80"/><rect class="mkw" x="716.50" y="31.42" width="3.00" height="0.80"/><rect class="mtxt" x="720.00" y="31.42" width="5.00" height="0.80"/><rect class="mtxt" x="725.00" y="31.42" width="0.50" height="0.80"/><rect class="mtxt" x="725.50" y="31.42" width="0.50" height="0.80"/><rect class="mtxt" x="726.50" y="31.42" width="0.50" height="0.80"/><rect class="mfn" x="727.50" y="31.42" width="4.00" height="0.80"/><rect class="mfn" x="731.50" y="31.42" width="0.50" height="0.80"/><rect class="mvar" x="732.00" y="31.42" width="0.50" height="0.80"/><rect class="mvar" x="732.50" y="31.42" width="0.50" height="0.80"/><rect class="mnum" x="733.00" y="31.42" width="0.50" height="0.80"/><rect class="mtxt" x="733.50" y="31.42" width="0.50" height="0.80"/><rect class="mvar" x="734.50" y="31.42" width="0.50" height="0.80"/><rect class="mvar" x="735.00" y="31.42" width="0.50" height="0.80"/><rect class="mvar" x="735.50" y="31.42" width="8.50" height="0.80"/><rect class="mtxt" x="744.00" y="31.42" width="0.50" height="0.80"/><rect class="mvar" x="745.00" y="31.42" width="1.50" height="0.80"/><rect class="mvar" x="746.50" y="31.42" width="0.50" height="0.80"/><rect class="mnum" x="747.00" y="31.42" width="1.00" height="0.80"/><rect class="mfn" x="748.00" y="31.42" width="0.50" height="0.80"/><rect class="mtxt" x="748.50" y="31.42" width="0.50" height="0.80"/><rect class="mtxt" x="749.50" y="31.42" width="0.50" height="0.80"/><rect class="mkw" x="716.50" y="32.40" width="3.00" height="0.80"/><rect class="mtxt" x="720.00" y="32.40" width="3.50" height="0.80"/><rect class="mtxt" x="723.50" y="32.40" width="0.50" height="0.80"/><rect class="mtxt" x="724.00" y="32.40" width="0.50" height="0.80"/><rect class="mtxt" x="724.50" y="32.40" width="0.50" height="0.80"/><rect class="mtxt" x="725.50" y="32.40" width="0.50" height="0.80"/><rect class="mtxt" x="726.00" y="32.40" width="0.50" height="0.80"/><rect class="mtxt" x="727.00" y="32.40" width="0.50" height="0.80"/><rect class="mtxt" x="727.50" y="32.40" width="0.50" height="0.80"/><rect class="mtxt" x="728.50" y="32.40" width="0.50" height="0.80"/><rect class="mfn" x="729.50" y="32.40" width="4.50" height="0.80"/><rect class="mfn" x="734.00" y="32.40" width="0.50" height="0.80"/><rect class="mnum" x="734.50" y="32.40" width="0.50" height="0.80"/><rect class="mvar" x="735.00" y="32.40" width="0.50" height="0.80"/><rect class="mtxt" x="735.50" y="32.40" width="0.50" height="0.80"/><rect class="mnum" x="736.50" y="32.40" width="0.50" height="0.80"/><rect class="mtxt" x="737.00" y="32.40" width="0.50" height="0.80"/><rect class="mnum" x="738.00" y="32.40" width="0.50" height="0.80"/><rect class="mnum" x="738.50" y="32.40" width="0.50" height="0.80"/><rect class="mfn" x="739.00" y="32.40" width="0.50" height="0.80"/><rect class="mfn" x="740.00" y="32.40" width="4.00" height="0.80"/><rect class="mfn" x="744.00" y="32.40" width="0.50" height="0.80"/><rect class="mvar" x="744.50" y="32.40" width="0.50" height="0.80"/><rect class="mvar" x="745.00" y="32.40" width="0.50" height="0.80"/><rect class="mvar" x="745.50" y="32.40" width="0.50" height="0.80"/><rect class="mnum" x="746.00" y="32.40" width="0.50" height="0.80"/><rect class="mnum" x="746.50" y="32.40" width="0.50" height="0.80"/><rect class="mtxt" x="747.00" y="32.40" width="0.50" height="0.80"/><rect class="mvar" x="748.00" y="32.40" width="0.50" height="0.80"/><rect class="mvar" x="748.50" y="32.40" width="0.50" height="0.80"/><rect class="mvar" x="749.00" y="32.40" width="0.50" height="0.80"/><rect class="mtxt" x="749.50" y="32.40" width="0.50" height="0.80"/><rect class="mvar" x="750.50" y="32.40" width="3.00" height="0.80"/><rect class="mvar" x="753.50" y="32.40" width="0.50" height="0.80"/><rect class="mvar" x="754.00" y="32.40" width="2.00" height="0.80"/><rect class="mfn" x="756.00" y="32.40" width="0.50" height="0.80"/><rect class="mtxt" x="756.50" y="32.40" width="0.50" height="0.80"/><rect class="mtxt" x="757.50" y="32.40" width="0.50" height="0.80"/><rect class="mkw" x="716.50" y="33.38" width="3.00" height="0.80"/><rect class="mtxt" x="720.00" y="33.38" width="5.50" height="0.80"/><rect class="mtxt" x="725.50" y="33.38" width="0.50" height="0.80"/><rect class="mtxt" x="726.00" y="33.38" width="3.00" height="0.80"/><rect class="mtxt" x="729.00" y="33.38" width="0.50" height="0.80"/><rect class="mtxt" x="730.00" y="33.38" width="0.50" height="0.80"/><rect class="mfn" x="731.00" y="33.38" width="2.00" height="0.80"/><rect class="mfn" x="733.00" y="33.38" width="0.50" height="0.80"/><rect class="mnum" x="733.50" y="33.38" width="0.50" height="0.80"/><rect class="mnum" x="734.00" y="33.38" width="1.50" height="0.80"/><rect class="mtxt" x="735.50" y="33.38" width="0.50" height="0.80"/><rect class="mnum" x="736.50" y="33.38" width="0.50" height="0.80"/><rect class="mtxt" x="737.00" y="33.38" width="0.50" height="0.80"/><rect class="mvar" x="738.00" y="33.38" width="3.00" height="0.80"/><rect class="mnum" x="741.00" y="33.38" width="0.50" height="0.80"/><rect class="mtxt" x="741.50" y="33.38" width="0.50" height="0.80"/><rect class="mvar" x="742.50" y="33.38" width="3.00" height="0.80"/><rect class="mvar" x="745.50" y="33.38" width="0.50" height="0.80"/><rect class="mvar" x="746.00" y="33.38" width="2.00" height="0.80"/><rect class="mfn" x="748.00" y="33.38" width="0.50" height="0.80"/><rect class="mtxt" x="748.50" y="33.38" width="0.50" height="0.80"/><rect class="mtxt" x="749.50" y="33.38" width="0.50" height="0.80"/><rect class="mkw" x="716.50" y="34.36" width="3.00" height="0.80"/><rect class="mtxt" x="720.00" y="34.36" width="2.50" height="0.80"/><rect class="mtxt" x="722.50" y="34.36" width="0.50" height="0.80"/><rect class="mtxt" x="723.00" y="34.36" width="3.00" height="0.80"/><rect class="mtxt" x="726.00" y="34.36" width="0.50" height="0.80"/><rect class="mtxt" x="716.50" y="35.34" width="0.50" height="0.80"/><rect class="mfn" x="718.50" y="36.32" width="4.50" height="0.80"/><rect class="mfn" x="723.00" y="36.32" width="0.50" height="0.80"/><rect class="mnum" x="723.50" y="36.32" width="0.50" height="0.80"/><rect class="mnum" x="724.00" y="36.32" width="0.50" height="0.80"/><rect class="mtxt" x="724.50" y="36.32" width="0.50" height="0.80"/><rect class="mnum" x="725.50" y="36.32" width="0.50" height="0.80"/><rect class="mtxt" x="726.00" y="36.32" width="0.50" height="0.80"/><rect class="mvar" x="727.00" y="36.32" width="3.00" height="0.80"/><rect class="mnum" x="730.00" y="36.32" width="0.50" height="0.80"/><rect class="mfn" x="730.50" y="36.32" width="0.50" height="0.80"/><rect class="mtxt" x="718.50" y="37.30" width="0.50" height="0.80"/><rect class="mfn" x="720.50" y="38.28" width="3.00" height="0.80"/><rect class="mfn" x="723.50" y="38.28" width="0.50" height="0.80"/><rect class="mnum" x="724.00" y="38.28" width="1.50" height="0.80"/><rect class="mfn" x="725.50" y="38.28" width="0.50" height="0.80"/><rect class="mfn" x="718.50" y="40.24" width="4.50" height="0.80"/><rect class="mfn" x="723.00" y="40.24" width="0.50" height="0.80"/><rect class="mnum" x="723.50" y="40.24" width="0.50" height="0.80"/><rect class="mnum" x="724.00" y="40.24" width="0.50" height="0.80"/><rect class="mtxt" x="724.50" y="40.24" width="0.50" height="0.80"/><rect class="mnum" x="725.50" y="40.24" width="0.50" height="0.80"/><rect class="mtxt" x="726.00" y="40.24" width="0.50" height="0.80"/><rect class="mnum" x="727.00" y="40.24" width="0.50" height="0.80"/><rect class="mnum" x="727.50" y="40.24" width="0.50" height="0.80"/><rect class="mfn" x="728.00" y="40.24" width="0.50" height="0.80"/><rect class="mtxt" x="718.50" y="41.22" width="0.50" height="0.80"/><rect class="mfn" x="720.50" y="42.20" width="4.50" height="0.80"/><rect class="mfn" x="725.00" y="42.20" width="0.50" height="0.80"/><rect class="mnum" x="725.50" y="42.20" width="0.50" height="0.80"/><rect class="mnum" x="726.00" y="42.20" width="0.50" height="0.80"/><rect class="mtxt" x="726.50" y="42.20" width="0.50" height="0.80"/><rect class="mnum" x="727.50" y="42.20" width="0.50" height="0.80"/><rect class="mtxt" x="728.00" y="42.20" width="0.50" height="0.80"/><rect class="mnum" x="729.00" y="42.20" width="0.50" height="0.80"/><rect class="mnum" x="729.50" y="42.20" width="0.50" height="0.80"/><rect class="mfn" x="730.00" y="42.20" width="0.50" height="0.80"/><rect class="mfn" x="720.50" y="43.18" width="3.00" height="0.80"/><rect class="mfn" x="723.50" y="43.18" width="0.50" height="0.80"/><rect class="mnum" x="724.00" y="43.18" width="0.50" height="0.80"/><rect class="mfn" x="724.50" y="43.18" width="0.50" height="0.80"/><rect class="mtxt" x="718.50" y="45.14" width="0.50" height="0.80"/><rect class="mtxt" x="718.50" y="46.12" width="0.50" height="0.80"/><rect class="mfn" x="720.50" y="47.10" width="4.50" height="0.80"/><rect class="mfn" x="725.00" y="47.10" width="0.50" height="0.80"/><rect class="mnum" x="725.50" y="47.10" width="0.50" height="0.80"/><rect class="mnum" x="726.00" y="47.10" width="0.50" height="0.80"/><rect class="mtxt" x="726.50" y="47.10" width="0.50" height="0.80"/><rect class="mnum" x="727.50" y="47.10" width="0.50" height="0.80"/><rect class="mtxt" x="728.00" y="47.10" width="0.50" height="0.80"/><rect class="mvar" x="729.00" y="47.10" width="4.50" height="0.80"/><rect class="mnum" x="733.50" y="47.10" width="0.50" height="0.80"/><rect class="mfn" x="734.00" y="47.10" width="0.50" height="0.80"/><rect class="mfn" x="720.50" y="48.08" width="4.50" height="0.80"/><rect class="mfn" x="725.00" y="48.08" width="0.50" height="0.80"/><rect class="mnum" x="725.50" y="48.08" width="0.50" height="0.80"/><rect class="mnum" x="726.00" y="48.08" width="0.50" height="0.80"/><rect class="mtxt" x="726.50" y="48.08" width="0.50" height="0.80"/><rect class="mnum" x="727.50" y="48.08" width="0.50" height="0.80"/><rect class="mtxt" x="728.00" y="48.08" width="0.50" height="0.80"/><rect class="mvar" x="729.00" y="48.08" width="8.00" height="0.80"/><rect class="mnum" x="737.00" y="48.08" width="0.50" height="0.80"/><rect class="mfn" x="737.50" y="48.08" width="0.50" height="0.80"/><rect class="mfn" x="720.50" y="49.06" width="3.00" height="0.80"/><rect class="mfn" x="723.50" y="49.06" width="0.50" height="0.80"/><rect class="mnum" x="724.00" y="49.06" width="0.50" height="0.80"/><rect class="mnum" x="724.50" y="49.06" width="1.50" height="0.80"/><rect class="mtxt" x="726.00" y="49.06" width="0.50" height="0.80"/><rect class="mnum" x="726.50" y="49.06" width="0.50" height="0.80"/><rect class="mtxt" x="727.00" y="49.06" width="0.50" height="0.80"/><rect class="mnum" x="727.50" y="49.06" width="0.50" height="0.80"/><rect class="mnum" x="728.00" y="49.06" width="0.50" height="0.80"/><rect class="mfn" x="728.50" y="49.06" width="0.50" height="0.80"/><rect class="mkw" x="720.50" y="50.04" width="1.00" height="0.80"/><rect class="mtxt" x="722.00" y="50.04" width="0.50" height="0.80"/><rect class="mkw" x="722.50" y="50.04" width="1.50" height="0.80"/><rect class="mvar" x="724.00" y="50.04" width="2.50" height="0.80"/><rect class="mtxt" x="726.50" y="50.04" width="0.50" height="0.80"/><rect class="mkw" x="727.50" y="50.04" width="3.00" height="0.80"/><rect class="mtxt" x="731.00" y="50.04" width="0.50" height="0.80"/><rect class="mstr_" x="731.50" y="50.04" width="7.50" height="0.80"/><rect class="mtxt" x="739.00" y="50.04" width="0.50" height="0.80"/><rect class="mtxt" x="739.50" y="50.04" width="0.50" height="0.80"/><rect class="mtxt" x="740.50" y="50.04" width="2.00" height="0.80"/><rect class="mfn" x="743.00" y="50.04" width="3.00" height="0.80"/><rect class="mfn" x="746.00" y="50.04" width="0.50" height="0.80"/><rect class="mfn" x="746.50" y="50.04" width="0.50" height="0.80"/><rect class="mtxt" x="747.50" y="50.04" width="4.50" height="0.80"/><rect class="mtxt" x="752.00" y="50.04" width="0.50" height="0.80"/><rect class="mtxt" x="752.50" y="50.04" width="0.50" height="0.80"/><rect class="mtxt" x="753.00" y="50.04" width="0.50" height="0.80"/><rect class="mfn" x="720.50" y="52.00" width="4.50" height="0.80"/><rect class="mfn" x="725.00" y="52.00" width="0.50" height="0.80"/><rect class="mnum" x="725.50" y="52.00" width="0.50" height="0.80"/><rect class="mnum" x="726.00" y="52.00" width="0.50" height="0.80"/><rect class="mtxt" x="726.50" y="52.00" width="0.50" height="0.80"/><rect class="mnum" x="727.50" y="52.00" width="0.50" height="0.80"/><rect class="mtxt" x="728.00" y="52.00" width="0.50" height="0.80"/><rect class="mvar" x="729.00" y="52.00" width="8.50" height="0.80"/><rect class="mvar" x="737.50" y="52.00" width="0.50" height="0.80"/><rect class="mvar" x="738.00" y="52.00" width="8.00" height="0.80"/><rect class="mnum" x="746.00" y="52.00" width="0.50" height="0.80"/><rect class="mfn" x="746.50" y="52.00" width="0.50" height="0.80"/><rect class="mfn" x="720.50" y="52.98" width="3.00" height="0.80"/><rect class="mfn" x="723.50" y="52.98" width="0.50" height="0.80"/><rect class="mnum" x="724.00" y="52.98" width="1.50" height="0.80"/><rect class="mfn" x="725.50" y="52.98" width="0.50" height="0.80"/><rect class="mkw" x="720.50" y="53.96" width="1.00" height="0.80"/><rect class="mtxt" x="722.00" y="53.96" width="0.50" height="0.80"/><rect class="mkw" x="722.50" y="53.96" width="1.50" height="0.80"/><rect class="mvar" x="724.00" y="53.96" width="2.50" height="0.80"/><rect class="mtxt" x="726.50" y="53.96" width="0.50" height="0.80"/><rect class="mkw" x="727.50" y="53.96" width="3.00" height="0.80"/><rect class="mtxt" x="731.00" y="53.96" width="0.50" height="0.80"/><rect class="mstr_" x="731.50" y="53.96" width="7.50" height="0.80"/><rect class="mtxt" x="739.00" y="53.96" width="0.50" height="0.80"/><rect class="mtxt" x="739.50" y="53.96" width="0.50" height="0.80"/><rect class="mtxt" x="740.50" y="53.96" width="2.00" height="0.80"/><rect class="mtxt" x="743.00" y="53.96" width="4.50" height="0.80"/><rect class="mtxt" x="747.50" y="53.96" width="0.50" height="0.80"/><rect class="mtxt" x="748.00" y="53.96" width="0.50" height="0.80"/><rect class="mtxt" x="748.50" y="53.96" width="0.50" height="0.80"/><rect class="mfn" x="720.50" y="55.92" width="4.50" height="0.80"/><rect class="mfn" x="725.00" y="55.92" width="0.50" height="0.80"/><rect class="mnum" x="725.50" y="55.92" width="0.50" height="0.80"/><rect class="mnum" x="726.00" y="55.92" width="1.00" height="0.80"/><rect class="mtxt" x="727.00" y="55.92" width="0.50" height="0.80"/><rect class="mnum" x="728.00" y="55.92" width="0.50" height="0.80"/><rect class="mtxt" x="728.50" y="55.92" width="0.50" height="0.80"/><rect class="mnum" x="729.50" y="55.92" width="0.50" height="0.80"/><rect class="mnum" x="730.00" y="55.92" width="0.50" height="0.80"/><rect class="mfn" x="730.50" y="55.92" width="0.50" height="0.80"/><rect class="mtxt" x="731.50" y="55.92" width="5.00" height="0.80"/><rect class="mtxt" x="736.50" y="55.92" width="0.50" height="0.80"/><rect class="mtxt" x="737.00" y="55.92" width="0.50" height="0.80"/><rect class="mtxt" x="737.50" y="55.92" width="0.50" height="0.80"/><rect class="mfn" x="720.50" y="56.90" width="4.50" height="0.80"/><rect class="mfn" x="725.00" y="56.90" width="0.50" height="0.80"/><rect class="mnum" x="725.50" y="56.90" width="0.50" height="0.80"/><rect class="mnum" x="726.00" y="56.90" width="0.50" height="0.80"/><rect class="mnum" x="726.50" y="56.90" width="1.00" height="0.80"/><rect class="mtxt" x="727.50" y="56.90" width="0.50" height="0.80"/><rect class="mnum" x="728.50" y="56.90" width="0.50" height="0.80"/><rect class="mtxt" x="729.00" y="56.90" width="0.50" height="0.80"/><rect class="mnum" x="730.00" y="56.90" width="0.50" height="0.80"/><rect class="mnum" x="730.50" y="56.90" width="0.50" height="0.80"/><rect class="mfn" x="731.00" y="56.90" width="0.50" height="0.80"/><rect class="mtxt" x="732.00" y="56.90" width="5.00" height="0.80"/><rect class="mtxt" x="737.00" y="56.90" width="0.50" height="0.80"/><rect class="mtxt" x="737.50" y="56.90" width="0.50" height="0.80"/><rect class="mtxt" x="738.00" y="56.90" width="0.50" height="0.80"/><rect class="mfn" x="720.50" y="58.86" width="4.50" height="0.80"/><rect class="mfn" x="725.00" y="58.86" width="0.50" height="0.80"/><rect class="mnum" x="725.50" y="58.86" width="0.50" height="0.80"/><rect class="mnum" x="726.00" y="58.86" width="0.50" height="0.80"/><rect class="mtxt" x="726.50" y="58.86" width="0.50" height="0.80"/><rect class="mnum" x="727.50" y="58.86" width="0.50" height="0.80"/><rect class="mtxt" x="728.00" y="58.86" width="0.50" height="0.80"/><rect class="mvar" x="729.00" y="58.86" width="8.00" height="0.80"/><rect class="mvar" x="737.00" y="58.86" width="0.50" height="0.80"/><rect class="mvar" x="737.50" y="58.86" width="6.50" height="0.80"/><rect class="mvar" x="744.00" y="58.86" width="0.50" height="0.80"/><rect class="mvar" x="744.50" y="58.86" width="6.50" height="0.80"/><rect class="mnum" x="751.00" y="58.86" width="0.50" height="0.80"/><rect class="mnum" x="751.50" y="58.86" width="0.50" height="0.80"/><rect class="mvar" x="752.00" y="58.86" width="0.50" height="0.80"/><rect class="mvar" x="752.50" y="58.86" width="5.50" height="0.80"/><rect class="mnum" x="758.00" y="58.86" width="0.50" height="0.80"/><rect class="mnum" x="758.50" y="58.86" width="0.50" height="0.80"/><rect class="mnum" x="759.00" y="58.86" width="0.50" height="0.80"/><rect class="mvar" x="759.50" y="58.86" width="0.50" height="0.80"/><rect class="mvar" x="760.00" y="58.86" width="3.00" height="0.80"/><rect class="mnum" x="763.00" y="58.86" width="0.50" height="0.80"/><rect class="mfn" x="763.50" y="58.86" width="0.50" height="0.80"/><rect class="mfn" x="720.50" y="59.84" width="3.00" height="0.80"/><rect class="mfn" x="723.50" y="59.84" width="0.50" height="0.80"/><rect class="mnum" x="724.00" y="59.84" width="0.50" height="0.80"/><rect class="mnum" x="724.50" y="59.84" width="0.50" height="0.80"/><rect class="mtxt" x="725.00" y="59.84" width="0.50" height="0.80"/><rect class="mnum" x="726.00" y="59.84" width="1.50" height="0.80"/><rect class="mtxt" x="727.50" y="59.84" width="0.50" height="0.80"/><rect class="mnum" x="728.50" y="59.84" width="0.50" height="0.80"/><rect class="mnum" x="729.00" y="59.84" width="0.50" height="0.80"/><rect class="mfn" x="729.50" y="59.84" width="0.50" height="0.80"/><rect class="mtxt" x="720.50" y="60.82" width="0.50" height="0.80"/><rect class="mkw" x="722.50" y="61.80" width="1.00" height="0.80"/><rect class="mtxt" x="724.00" y="61.80" width="0.50" height="0.80"/><rect class="mkw" x="724.50" y="61.80" width="1.50" height="0.80"/><rect class="mvar" x="726.00" y="61.80" width="2.50" height="0.80"/><rect class="mtxt" x="728.50" y="61.80" width="0.50" height="0.80"/><rect class="mkw" x="729.50" y="61.80" width="3.00" height="0.80"/><rect class="mtxt" x="733.00" y="61.80" width="0.50" height="0.80"/><rect class="mstr_" x="733.50" y="61.80" width="7.00" height="0.80"/><rect class="mtxt" x="740.50" y="61.80" width="0.50" height="0.80"/><rect class="mtxt" x="741.00" y="61.80" width="0.50" height="0.80"/><rect class="mtxt" x="742.00" y="61.80" width="2.00" height="0.80"/><rect class="mfn" x="744.50" y="61.80" width="3.00" height="0.80"/><rect class="mfn" x="747.50" y="61.80" width="0.50" height="0.80"/><rect class="mfn" x="748.00" y="61.80" width="0.50" height="0.80"/><rect class="mtxt" x="749.00" y="61.80" width="4.00" height="0.80"/><rect class="mtxt" x="753.00" y="61.80" width="0.50" height="0.80"/><rect class="mtxt" x="753.50" y="61.80" width="0.50" height="0.80"/><rect class="mtxt" x="754.00" y="61.80" width="0.50" height="0.80"/><rect class="mkw" x="722.50" y="62.78" width="1.50" height="0.80"/><rect class="mtxt" x="724.00" y="62.78" width="0.50" height="0.80"/><rect class="mvar" x="724.50" y="62.78" width="0.50" height="0.80"/><rect class="mvar" x="725.00" y="62.78" width="0.50" height="0.80"/><rect class="mnum" x="725.50" y="62.78" width="0.50" height="0.80"/><rect class="mnum" x="726.00" y="62.78" width="0.50" height="0.80"/><rect class="mnum" x="726.50" y="62.78" width="1.00" height="0.80"/><rect class="mtxt" x="727.50" y="62.78" width="0.50" height="0.80"/><rect class="mnum" x="728.00" y="62.78" width="1.00" height="0.80"/><rect class="mnum" x="729.00" y="62.78" width="0.50" height="0.80"/><rect class="mtxt" x="729.50" y="62.78" width="0.50" height="0.80"/><rect class="mfn" x="722.50" y="63.76" width="4.50" height="0.80"/><rect class="mfn" x="727.00" y="63.76" width="0.50" height="0.80"/><rect class="mnum" x="727.50" y="63.76" width="0.50" height="0.80"/><rect class="mvar" x="728.00" y="63.76" width="0.50" height="0.80"/><rect class="mtxt" x="728.50" y="63.76" width="0.50" height="0.80"/><rect class="mnum" x="729.00" y="63.76" width="0.50" height="0.80"/><rect class="mtxt" x="729.50" y="63.76" width="0.50" height="0.80"/><rect class="mnum" x="730.00" y="63.76" width="0.50" height="0.80"/><rect class="mnum" x="730.50" y="63.76" width="0.50" height="0.80"/><rect class="mfn" x="731.00" y="63.76" width="0.50" height="0.80"/><rect class="mtxt" x="722.50" y="64.74" width="2.50" height="0.80"/><rect class="mtxt" x="725.00" y="64.74" width="0.50" height="0.80"/><rect class="mtxt" x="725.50" y="64.74" width="0.50" height="0.80"/><rect class="mtxt" x="726.00" y="64.74" width="0.50" height="0.80"/><rect class="mtxt" x="720.50" y="65.72" width="0.50" height="0.80"/><rect class="mfn" x="720.50" y="67.68" width="4.50" height="0.80"/><rect class="mfn" x="725.00" y="67.68" width="0.50" height="0.80"/><rect class="mnum" x="725.50" y="67.68" width="0.50" height="0.80"/><rect class="mnum" x="726.00" y="67.68" width="0.50" height="0.80"/><rect class="mtxt" x="726.50" y="67.68" width="0.50" height="0.80"/><rect class="mnum" x="727.50" y="67.68" width="1.00" height="0.80"/><rect class="mnum" x="728.50" y="67.68" width="0.50" height="0.80"/><rect class="mnum" x="729.00" y="67.68" width="1.00" height="0.80"/><rect class="mtxt" x="730.00" y="67.68" width="0.50" height="0.80"/><rect class="mvar" x="731.00" y="67.68" width="8.00" height="0.80"/><rect class="mnum" x="739.00" y="67.68" width="0.50" height="0.80"/><rect class="mnum" x="739.50" y="67.68" width="0.50" height="0.80"/><rect class="mnum" x="740.00" y="67.68" width="0.50" height="0.80"/><rect class="mfn" x="740.50" y="67.68" width="0.50" height="0.80"/><rect class="mtxt" x="741.50" y="67.68" width="2.00" height="0.80"/><rect class="mnum" x="743.50" y="67.68" width="1.00" height="0.80"/><rect class="mtxt" x="744.50" y="67.68" width="0.50" height="0.80"/><rect class="mnum" x="745.00" y="67.68" width="1.00" height="0.80"/><rect class="mtxt" x="746.00" y="67.68" width="0.50" height="0.80"/><rect class="mtxt" x="746.50" y="67.68" width="0.50" height="0.80"/><rect class="mcom" x="720.50" y="69.64" width="1.00" height="0.80"/><rect class="mcom" x="722.00" y="69.64" width="2.00" height="0.80"/><rect class="mcom" x="724.50" y="69.64" width="4.00" height="0.80"/><rect class="mcom" x="729.00" y="69.64" width="1.50" height="0.80"/><rect class="mcom" x="731.00" y="69.64" width="3.00" height="0.80"/><rect class="mcom" x="734.50" y="69.64" width="2.00" height="0.80"/><rect class="mfn" x="720.50" y="70.62" width="4.50" height="0.80"/><rect class="mfn" x="725.00" y="70.62" width="0.50" height="0.80"/><rect class="mnum" x="725.50" y="70.62" width="0.50" height="0.80"/><rect class="mnum" x="726.00" y="70.62" width="0.50" height="0.80"/><rect class="mtxt" x="726.50" y="70.62" width="0.50" height="0.80"/><rect class="mnum" x="727.00" y="70.62" width="0.50" height="0.80"/><rect class="mnum" x="727.50" y="70.62" width="0.50" height="0.80"/><rect class="mtxt" x="728.00" y="70.62" width="0.50" height="0.80"/><rect class="mvar" x="729.00" y="70.62" width="8.50" height="0.80"/><rect class="mnum" x="737.50" y="70.62" width="0.50" height="0.80"/><rect class="mnum" x="738.00" y="70.62" width="1.00" height="0.80"/><rect class="mnum" x="739.00" y="70.62" width="0.50" height="0.80"/><rect class="mnum" x="739.50" y="70.62" width="0.50" height="0.80"/><rect class="mnum" x="740.00" y="70.62" width="0.50" height="0.80"/><rect class="mfn" x="740.50" y="70.62" width="0.50" height="0.80"/><rect class="mtxt" x="720.50" y="71.60" width="3.50" height="0.80"/><rect class="mtxt" x="724.00" y="71.60" width="0.50" height="0.80"/><rect class="mnum" x="724.50" y="71.60" width="0.50" height="0.80"/><rect class="mtxt" x="725.00" y="71.60" width="0.50" height="0.80"/><rect class="mnum" x="726.00" y="71.60" width="1.00" height="0.80"/><rect class="mtxt" x="727.00" y="71.60" width="0.50" height="0.80"/><rect class="mnum" x="728.00" y="71.60" width="0.50" height="0.80"/><rect class="mtxt" x="728.50" y="71.60" width="0.50" height="0.80"/><rect class="mtxt" x="729.00" y="71.60" width="0.50" height="0.80"/><rect class="mcom" x="720.50" y="73.56" width="1.00" height="0.80"/><rect class="mcom" x="722.00" y="73.56" width="3.00" height="0.80"/><rect class="mcom" x="725.50" y="73.56" width="2.00" height="0.80"/><rect class="mfn" x="720.50" y="74.54" width="4.50" height="0.80"/><rect class="mfn" x="725.00" y="74.54" width="0.50" height="0.80"/><rect class="mnum" x="725.50" y="74.54" width="0.50" height="0.80"/><rect class="mnum" x="726.00" y="74.54" width="0.50" height="0.80"/><rect class="mnum" x="726.50" y="74.54" width="1.00" height="0.80"/><rect class="mnum" x="727.50" y="74.54" width="0.50" height="0.80"/><rect class="mnum" x="728.00" y="74.54" width="0.50" height="0.80"/><rect class="mtxt" x="728.50" y="74.54" width="0.50" height="0.80"/><rect class="mnum" x="729.00" y="74.54" width="0.50" height="0.80"/><rect class="mnum" x="729.50" y="74.54" width="0.50" height="0.80"/><rect class="mnum" x="730.00" y="74.54" width="0.50" height="0.80"/><rect class="mnum" x="730.50" y="74.54" width="0.50" height="0.80"/><rect class="mnum" x="731.00" y="74.54" width="0.50" height="0.80"/><rect class="mnum" x="731.50" y="74.54" width="0.50" height="0.80"/><rect class="mtxt" x="732.00" y="74.54" width="0.50" height="0.80"/><rect class="mvar" x="733.00" y="74.54" width="5.50" height="0.80"/><rect class="mnum" x="738.50" y="74.54" width="0.50" height="0.80"/><rect class="mnum" x="739.00" y="74.54" width="0.50" height="0.80"/><rect class="mvar" x="739.50" y="74.54" width="0.50" height="0.80"/><rect class="mvar" x="740.00" y="74.54" width="8.00" height="0.80"/><rect class="mnum" x="748.00" y="74.54" width="0.50" height="0.80"/><rect class="mnum" x="748.50" y="74.54" width="0.50" height="0.80"/><rect class="mnum" x="749.00" y="74.54" width="0.50" height="0.80"/><rect class="mfn" x="749.50" y="74.54" width="0.50" height="0.80"/><rect class="mfn" x="720.50" y="75.52" width="3.00" height="0.80"/><rect class="mfn" x="723.50" y="75.52" width="0.50" height="0.80"/><rect class="mnum" x="724.00" y="75.52" width="0.50" height="0.80"/><rect class="mnum" x="724.50" y="75.52" width="0.50" height="0.80"/><rect class="mtxt" x="725.00" y="75.52" width="0.50" height="0.80"/><rect class="mnum" x="726.00" y="75.52" width="1.00" height="0.80"/><rect class="mtxt" x="727.00" y="75.52" width="0.50" height="0.80"/><rect class="mnum" x="728.00" y="75.52" width="0.50" height="0.80"/><rect class="mnum" x="728.50" y="75.52" width="0.50" height="0.80"/><rect class="mfn" x="729.00" y="75.52" width="0.50" height="0.80"/><rect class="mtxt" x="720.50" y="76.50" width="5.50" height="0.80"/><rect class="mtxt" x="726.00" y="76.50" width="0.50" height="0.80"/><rect class="mtxt" x="726.50" y="76.50" width="5.50" height="0.80"/><rect class="mtxt" x="732.00" y="76.50" width="0.50" height="0.80"/><rect class="mtxt" x="732.50" y="76.50" width="0.50" height="0.80"/><rect class="mfn" x="720.50" y="78.46" width="4.50" height="0.80"/><rect class="mfn" x="725.00" y="78.46" width="0.50" height="0.80"/><rect class="mnum" x="725.50" y="78.46" width="0.50" height="0.80"/><rect class="mnum" x="726.00" y="78.46" width="1.00" height="0.80"/><rect class="mnum" x="727.00" y="78.46" width="0.50" height="0.80"/><rect class="mnum" x="727.50" y="78.46" width="0.50" height="0.80"/><rect class="mtxt" x="728.00" y="78.46" width="0.50" height="0.80"/><rect class="mnum" x="728.50" y="78.46" width="0.50" height="0.80"/><rect class="mnum" x="729.00" y="78.46" width="0.50" height="0.80"/><rect class="mnum" x="729.50" y="78.46" width="0.50" height="0.80"/><rect class="mnum" x="730.00" y="78.46" width="0.50" height="0.80"/><rect class="mnum" x="730.50" y="78.46" width="0.50" height="0.80"/><rect class="mnum" x="731.00" y="78.46" width="0.50" height="0.80"/><rect class="mtxt" x="731.50" y="78.46" width="0.50" height="0.80"/><rect class="mvar" x="732.50" y="78.46" width="5.50" height="0.80"/><rect class="mnum" x="738.00" y="78.46" width="0.50" height="0.80"/><rect class="mnum" x="738.50" y="78.46" width="0.50" height="0.80"/><rect class="mvar" x="739.00" y="78.46" width="0.50" height="0.80"/><rect class="mvar" x="739.50" y="78.46" width="8.00" height="0.80"/><rect class="mnum" x="747.50" y="78.46" width="0.50" height="0.80"/><rect class="mnum" x="748.00" y="78.46" width="0.50" height="0.80"/><rect class="mnum" x="748.50" y="78.46" width="0.50" height="0.80"/><rect class="mfn" x="749.00" y="78.46" width="0.50" height="0.80"/><rect class="mfn" x="720.50" y="79.44" width="3.00" height="0.80"/><rect class="mfn" x="723.50" y="79.44" width="0.50" height="0.80"/><rect class="mnum" x="724.00" y="79.44" width="0.50" height="0.80"/><rect class="mnum" x="724.50" y="79.44" width="0.50" height="0.80"/><rect class="mtxt" x="725.00" y="79.44" width="0.50" height="0.80"/><rect class="mnum" x="726.00" y="79.44" width="1.00" height="0.80"/><rect class="mtxt" x="727.00" y="79.44" width="0.50" height="0.80"/><rect class="mnum" x="728.00" y="79.44" width="0.50" height="0.80"/><rect class="mnum" x="728.50" y="79.44" width="0.50" height="0.80"/><rect class="mfn" x="729.00" y="79.44" width="0.50" height="0.80"/><rect class="mtxt" x="720.50" y="80.42" width="5.50" height="0.80"/><rect class="mtxt" x="726.00" y="80.42" width="0.50" height="0.80"/><rect class="mtxt" x="726.50" y="80.42" width="5.50" height="0.80"/><rect class="mtxt" x="732.00" y="80.42" width="0.50" height="0.80"/><rect class="mtxt" x="732.50" y="80.42" width="0.50" height="0.80"/><rect class="mtxt" x="718.50" y="81.40" width="0.50" height="0.80"/><rect class="mtxt" x="716.50" y="82.38" width="0.50" height="0.80"/><rect class="mkw" x="716.50" y="84.34" width="3.00" height="0.80"/><rect class="mtxt" x="720.00" y="84.34" width="4.00" height="0.80"/><rect class="mtxt" x="724.00" y="84.34" width="0.50" height="0.80"/><rect class="mtxt" x="724.50" y="84.34" width="3.00" height="0.80"/><rect class="mtxt" x="727.50" y="84.34" width="0.50" height="0.80"/><rect class="mtxt" x="728.00" y="84.34" width="3.00" height="0.80"/><rect class="mtxt" x="731.00" y="84.34" width="0.50" height="0.80"/><rect class="mtxt" x="716.50" y="85.32" width="0.50" height="0.80"/><rect class="mkw" x="718.50" y="86.30" width="1.50" height="0.80"/><rect class="mtxt" x="720.00" y="86.30" width="0.50" height="0.80"/><rect class="mvar" x="720.50" y="86.30" width="0.50" height="0.80"/><rect class="mvar" x="721.00" y="86.30" width="0.50" height="0.80"/><rect class="mnum" x="721.50" y="86.30" width="0.50" height="0.80"/><rect class="mnum" x="722.00" y="86.30" width="0.50" height="0.80"/><rect class="mnum" x="722.50" y="86.30" width="0.50" height="0.80"/><rect class="mtxt" x="723.00" y="86.30" width="0.50" height="0.80"/><rect class="mnum" x="723.50" y="86.30" width="0.50" height="0.80"/><rect class="mnum" x="724.00" y="86.30" width="0.50" height="0.80"/><rect class="mtxt" x="724.50" y="86.30" width="0.50" height="0.80"/><rect class="mfn" x="718.50" y="87.28" width="4.50" height="0.80"/><rect class="mfn" x="723.00" y="87.28" width="0.50" height="0.80"/><rect class="mnum" x="723.50" y="87.28" width="0.50" height="0.80"/><rect class="mnum" x="724.00" y="87.28" width="1.00" height="0.80"/><rect class="mvar" x="725.00" y="87.28" width="0.50" height="0.80"/><rect class="mvar" x="725.50" y="87.28" width="0.50" height="0.80"/><rect class="mtxt" x="726.00" y="87.28" width="0.50" height="0.80"/><rect class="mvar" x="726.50" y="87.28" width="10.50" height="0.80"/><rect class="mtxt" x="737.00" y="87.28" width="0.50" height="0.80"/><rect class="mnum" x="737.50" y="87.28" width="0.50" height="0.80"/><rect class="mnum" x="738.00" y="87.28" width="0.50" height="0.80"/><rect class="mfn" x="738.50" y="87.28" width="0.50" height="0.80"/><rect class="mfn" x="718.50" y="88.26" width="3.00" height="0.80"/><rect class="mfn" x="721.50" y="88.26" width="0.50" height="0.80"/><rect class="mnum" x="722.00" y="88.26" width="0.50" height="0.80"/><rect class="mvar" x="722.50" y="88.26" width="3.00" height="0.80"/><rect class="mtxt" x="725.50" y="88.26" width="0.50" height="0.80"/><rect class="mnum" x="726.00" y="88.26" width="0.50" height="0.80"/><rect class="mtxt" x="726.50" y="88.26" width="0.50" height="0.80"/><rect class="mnum" x="727.00" y="88.26" width="0.50" height="0.80"/><rect class="mnum" x="727.50" y="88.26" width="0.50" height="0.80"/><rect class="mfn" x="728.00" y="88.26" width="0.50" height="0.80"/><rect class="mfn" x="718.50" y="89.24" width="3.00" height="0.80"/><rect class="mfn" x="721.50" y="89.24" width="0.50" height="0.80"/><rect class="mnum" x="722.00" y="89.24" width="0.50" height="0.80"/><rect class="mnum" x="722.50" y="89.24" width="0.50" height="0.80"/><rect class="mtxt" x="723.00" y="89.24" width="0.50" height="0.80"/><rect class="mvar" x="723.50" y="89.24" width="3.00" height="0.80"/><rect class="mtxt" x="726.50" y="89.24" width="0.50" height="0.80"/><rect class="mnum" x="727.00" y="89.24" width="0.50" height="0.80"/><rect class="mnum" x="727.50" y="89.24" width="0.50" height="0.80"/><rect class="mfn" x="728.00" y="89.24" width="0.50" height="0.80"/><rect class="mfn" x="718.50" y="90.22" width="3.00" height="0.80"/><rect class="mfn" x="721.50" y="90.22" width="0.50" height="0.80"/><rect class="mnum" x="722.00" y="90.22" width="0.50" height="0.80"/><rect class="mnum" x="722.50" y="90.22" width="0.50" height="0.80"/><rect class="mtxt" x="723.00" y="90.22" width="0.50" height="0.80"/><rect class="mnum" x="724.00" y="90.22" width="0.50" height="0.80"/><rect class="mnum" x="724.50" y="90.22" width="1.00" height="0.80"/><rect class="mtxt" x="725.50" y="90.22" width="0.50" height="0.80"/><rect class="mnum" x="726.50" y="90.22" width="0.50" height="0.80"/><rect class="mnum" x="727.00" y="90.22" width="0.50" height="0.80"/><rect class="mfn" x="727.50" y="90.22" width="0.50" height="0.80"/><rect class="mkw" x="718.50" y="91.20" width="1.00" height="0.80"/><rect class="mtxt" x="720.00" y="91.20" width="0.50" height="0.80"/><rect class="mkw" x="720.50" y="91.20" width="1.50" height="0.80"/><rect class="mvar" x="722.00" y="91.20" width="2.50" height="0.80"/><rect class="mtxt" x="724.50" y="91.20" width="0.50" height="0.80"/><rect class="mkw" x="725.50" y="91.20" width="3.00" height="0.80"/><rect class="mtxt" x="729.00" y="91.20" width="0.50" height="0.80"/><rect class="mstr_" x="729.50" y="91.20" width="4.50" height="0.80"/><rect class="mtxt" x="734.00" y="91.20" width="0.50" height="0.80"/><rect class="mtxt" x="734.50" y="91.20" width="0.50" height="0.80"/><rect class="mtxt" x="735.50" y="91.20" width="2.00" height="0.80"/><rect class="mtxt" x="718.50" y="92.18" width="1.50" height="0.80"/><rect class="mtxt" x="720.00" y="92.18" width="0.50" height="0.80"/><rect class="mtxt" x="720.50" y="92.18" width="5.00" height="0.80"/><rect class="mtxt" x="725.50" y="92.18" width="0.50" height="0.80"/><rect class="mtxt" x="726.00" y="92.18" width="0.50" height="0.80"/><rect class="mtxt" x="716.50" y="93.16" width="0.50" height="0.80"/><rect class="mkw" x="716.50" y="95.12" width="3.00" height="0.80"/><rect class="mtxt" x="720.00" y="95.12" width="3.50" height="0.80"/><rect class="mtxt" x="723.50" y="95.12" width="0.50" height="0.80"/><rect class="mtxt" x="724.00" y="95.12" width="0.50" height="0.80"/><rect class="mtxt" x="716.50" y="96.10" width="0.50" height="0.80"/><rect class="mkw" x="718.50" y="97.08" width="1.50" height="0.80"/><rect class="mtxt" x="720.00" y="97.08" width="0.50" height="0.80"/><rect class="mvar" x="720.50" y="97.08" width="0.50" height="0.80"/><rect class="mvar" x="721.00" y="97.08" width="0.50" height="0.80"/><rect class="mnum" x="721.50" y="97.08" width="0.50" height="0.80"/><rect class="mnum" x="722.00" y="97.08" width="0.50" height="0.80"/><rect class="mtxt" x="722.50" y="97.08" width="0.50" height="0.80"/><rect class="mnum" x="723.00" y="97.08" width="0.50" height="0.80"/><rect class="mnum" x="723.50" y="97.08" width="0.50" height="0.80"/><rect class="mtxt" x="724.00" y="97.08" width="0.50" height="0.80"/><rect class="mkw" x="718.50" y="98.06" width="3.00" height="0.80"/><rect class="mtxt" x="721.50" y="98.06" width="0.50" height="0.80"/><rect class="mvar" x="722.00" y="98.06" width="2.50" height="0.80"/><rect class="mvar" x="724.50" y="98.06" width="0.50" height="0.80"/><rect class="mnum" x="725.00" y="98.06" width="1.50" height="0.80"/><rect class="mvar" x="726.50" y="98.06" width="0.50" height="0.80"/><rect class="mvar" x="727.00" y="98.06" width="0.50" height="0.80"/><rect class="mtxt" x="727.50" y="98.06" width="0.50" height="0.80"/><rect class="mkw" x="718.50" y="99.04" width="3.00" height="0.80"/><rect class="mtxt" x="721.50" y="99.04" width="0.50" height="0.80"/><rect class="mvar" x="722.00" y="99.04" width="5.50" height="0.80"/><rect class="mvar" x="727.50" y="99.04" width="0.50" height="0.80"/><rect class="mnum" x="728.00" y="99.04" width="0.50" height="0.80"/><rect class="mnum" x="728.50" y="99.04" width="0.50" height="0.80"/><rect class="mtxt" x="729.00" y="99.04" width="0.50" height="0.80"/><rect class="mvar" x="729.50" y="99.04" width="6.00" height="0.80"/><rect class="mvar" x="735.50" y="99.04" width="0.50" height="0.80"/><rect class="mvar" x="736.00" y="99.04" width="10.50" height="0.80"/><rect class="mnum" x="746.50" y="99.04" width="0.50" height="0.80"/><rect class="mtxt" x="747.00" y="99.04" width="0.50" height="0.80"/><rect class="mvar" x="720.50" y="100.02" width="5.50" height="0.80"/><rect class="mvar" x="726.00" y="100.02" width="0.50" height="0.80"/><rect class="mnum" x="726.50" y="100.02" width="0.50" height="0.80"/><rect class="mvar" x="727.00" y="100.02" width="5.50" height="0.80"/><rect class="mnum" x="732.50" y="100.02" width="0.50" height="0.80"/><rect class="mnum" x="733.00" y="100.02" width="0.50" height="0.80"/><rect class="mnum" x="733.50" y="100.02" width="0.50" height="0.80"/><rect class="mvar" x="734.00" y="100.02" width="0.50" height="0.80"/><rect class="mfn" x="734.50" y="100.02" width="1.50" height="0.80"/><rect class="mfn" x="736.00" y="100.02" width="0.50" height="0.80"/><rect class="mvar" x="736.50" y="100.02" width="2.50" height="0.80"/><rect class="mfn" x="739.00" y="100.02" width="0.50" height="0.80"/><rect class="mvar" x="739.50" y="100.02" width="0.50" height="0.80"/><rect class="mvar" x="740.00" y="100.02" width="5.50" height="0.80"/><rect class="mnum" x="745.50" y="100.02" width="0.50" height="0.80"/><rect class="mnum" x="746.00" y="100.02" width="0.50" height="0.80"/><rect class="mnum" x="746.50" y="100.02" width="0.50" height="0.80"/><rect class="mvar" x="747.00" y="100.02" width="0.50" height="0.80"/><rect class="mfn" x="747.50" y="100.02" width="1.50" height="0.80"/><rect class="mfn" x="749.00" y="100.02" width="0.50" height="0.80"/><rect class="mvar" x="749.50" y="100.02" width="2.50" height="0.80"/><rect class="mfn" x="752.00" y="100.02" width="0.50" height="0.80"/><rect class="mtxt" x="752.50" y="100.02" width="0.50" height="0.80"/><rect class="mvar" x="720.50" y="101.00" width="5.50" height="0.80"/><rect class="mnum" x="726.00" y="101.00" width="0.50" height="0.80"/><rect class="mnum" x="726.50" y="101.00" width="0.50" height="0.80"/><rect class="mnum" x="727.00" y="101.00" width="0.50" height="0.80"/><rect class="mvar" x="727.50" y="101.00" width="0.50" height="0.80"/><rect class="mfn" x="728.00" y="101.00" width="1.50" height="0.80"/><rect class="mfn" x="729.50" y="101.00" width="0.50" height="0.80"/><rect class="mvar" x="730.00" y="101.00" width="2.50" height="0.80"/><rect class="mfn" x="732.50" y="101.00" width="0.50" height="0.80"/><rect class="mvar" x="733.00" y="101.00" width="0.50" height="0.80"/><rect class="mvar" x="733.50" y="101.00" width="5.50" height="0.80"/><rect class="mnum" x="739.00" y="101.00" width="0.50" height="0.80"/><rect class="mnum" x="739.50" y="101.00" width="0.50" height="0.80"/><rect class="mnum" x="740.00" y="101.00" width="0.50" height="0.80"/><rect class="mvar" x="740.50" y="101.00" width="0.50" height="0.80"/><rect class="mfn" x="741.00" y="101.00" width="1.50" height="0.80"/><rect class="mfn" x="742.50" y="101.00" width="0.50" height="0.80"/><rect class="mvar" x="743.00" y="101.00" width="2.50" height="0.80"/><rect class="mfn" x="745.50" y="101.00" width="0.50" height="0.80"/><rect class="mvar" x="746.00" y="101.00" width="0.50" height="0.80"/><rect class="mvar" x="720.50" y="101.98" width="10.50" height="0.80"/><rect class="mnum" x="731.00" y="101.98" width="0.50" height="0.80"/><rect class="mtxt" x="731.50" y="101.98" width="0.50" height="0.80"/><rect class="mkw" x="718.50" y="102.96" width="3.00" height="0.80"/><rect class="mtxt" x="721.50" y="102.96" width="0.50" height="0.80"/><rect class="mvar" x="722.00" y="102.96" width="4.00" height="0.80"/><rect class="mvar" x="726.00" y="102.96" width="0.50" height="0.80"/><rect class="mvar" x="726.50" y="102.96" width="5.50" height="0.80"/><rect class="mvar" x="732.00" y="102.96" width="0.50" height="0.80"/><rect class="mvar" x="732.50" y="102.96" width="5.50" height="0.80"/><rect class="mtxt" x="738.00" y="102.96" width="0.50" height="0.80"/><rect class="mkw" x="718.50" y="103.94" width="3.00" height="0.80"/><rect class="mtxt" x="721.50" y="103.94" width="0.50" height="0.80"/><rect class="mvar" x="722.00" y="103.94" width="2.00" height="0.80"/><rect class="mvar" x="724.00" y="103.94" width="0.50" height="0.80"/><rect class="mfn" x="724.50" y="103.94" width="2.00" height="0.80"/><rect class="mfn" x="726.50" y="103.94" width="0.50" height="0.80"/><rect class="mvar" x="727.00" y="103.94" width="4.00" height="0.80"/><rect class="mnum" x="731.00" y="103.94" width="0.50" height="0.80"/><rect class="mnum" x="731.50" y="103.94" width="0.50" height="0.80"/><rect class="mnum" x="732.00" y="103.94" width="0.50" height="0.80"/><rect class="mvar" x="732.50" y="103.94" width="0.50" height="0.80"/><rect class="mvar" x="733.00" y="103.94" width="4.00" height="0.80"/><rect class="mnum" x="737.00" y="103.94" width="0.50" height="0.80"/><rect class="mnum" x="737.50" y="103.94" width="0.50" height="0.80"/><rect class="mnum" x="738.00" y="103.94" width="0.50" height="0.80"/><rect class="mvar" x="738.50" y="103.94" width="0.50" height="0.80"/><rect class="mvar" x="739.00" y="103.94" width="4.00" height="0.80"/><rect class="mnum" x="743.00" y="103.94" width="0.50" height="0.80"/><rect class="mnum" x="743.50" y="103.94" width="0.50" height="0.80"/><rect class="mnum" x="744.00" y="103.94" width="0.50" height="0.80"/><rect class="mvar" x="744.50" y="103.94" width="0.50" height="0.80"/><rect class="mvar" x="745.00" y="103.94" width="4.00" height="0.80"/><rect class="mnum" x="749.00" y="103.94" width="0.50" height="0.80"/><rect class="mnum" x="749.50" y="103.94" width="0.50" height="0.80"/><rect class="mnum" x="750.00" y="103.94" width="0.50" height="0.80"/><rect class="mfn" x="750.50" y="103.94" width="0.50" height="0.80"/><rect class="mtxt" x="751.00" y="103.94" width="0.50" height="0.80"/><rect class="mkw" x="718.50" y="104.92" width="3.00" height="0.80"/><rect class="mtxt" x="722.00" y="104.92" width="0.50" height="0.80"/><rect class="mvar" x="722.50" y="104.92" width="3.00" height="0.80"/><rect class="mvar" x="725.50" y="104.92" width="0.50" height="0.80"/><rect class="mfn" x="726.00" y="104.92" width="2.00" height="0.80"/><rect class="mfn" x="728.00" y="104.92" width="0.50" height="0.80"/><rect class="mvar" x="728.50" y="104.92" width="5.00" height="0.80"/><rect class="mvar" x="733.50" y="104.92" width="0.50" height="0.80"/><rect class="mvar" x="734.00" y="104.92" width="5.00" height="0.80"/><rect class="mvar" x="739.00" y="104.92" width="0.50" height="0.80"/><rect class="mvar" x="739.50" y="104.92" width="2.00" height="0.80"/><rect class="mvar" x="741.50" y="104.92" width="0.50" height="0.80"/><rect class="mvar" x="742.00" y="104.92" width="2.00" height="0.80"/><rect class="mfn" x="744.00" y="104.92" width="0.50" height="0.80"/><rect class="mtxt" x="744.50" y="104.92" width="0.50" height="0.80"/><rect class="mkw" x="718.50" y="105.90" width="3.00" height="0.80"/><rect class="mtxt" x="721.50" y="105.90" width="0.50" height="0.80"/><rect class="mvar" x="722.00" y="105.90" width="3.00" height="0.80"/><rect class="mvar" x="725.00" y="105.90" width="0.50" height="0.80"/><rect class="mnum" x="725.50" y="105.90" width="1.00" height="0.80"/><rect class="mvar" x="726.50" y="105.90" width="0.50" height="0.80"/><rect class="mfn" x="727.00" y="105.90" width="2.00" height="0.80"/><rect class="mfn" x="729.00" y="105.90" width="0.50" height="0.80"/><rect class="mvar" x="729.50" y="105.90" width="4.00" height="0.80"/><rect class="mnum" x="733.50" y="105.90" width="0.50" height="0.80"/><rect class="mnum" x="734.00" y="105.90" width="0.50" height="0.80"/><rect class="mnum" x="734.50" y="105.90" width="0.50" height="0.80"/><rect class="mvar" x="735.00" y="105.90" width="0.50" height="0.80"/><rect class="mvar" x="735.50" y="105.90" width="5.00" height="0.80"/><rect class="mfn" x="740.50" y="105.90" width="0.50" height="0.80"/><rect class="mtxt" x="741.00" y="105.90" width="0.50" height="0.80"/><rect class="mvar" x="721.00" y="106.88" width="3.00" height="0.80"/><rect class="mvar" x="724.00" y="106.88" width="0.50" height="0.80"/><rect class="mvar" x="724.50" y="106.88" width="0.50" height="0.80"/><rect class="mfn" x="725.00" y="106.88" width="2.50" height="0.80"/><rect class="mfn" x="727.50" y="106.88" width="0.50" height="0.80"/><rect class="mvar" x="728.00" y="106.88" width="4.00" height="0.80"/><rect class="mnum" x="732.00" y="106.88" width="0.50" height="0.80"/><rect class="mnum" x="732.50" y="106.88" width="0.50" height="0.80"/><rect class="mnum" x="733.00" y="106.88" width="0.50" height="0.80"/><rect class="mtxt" x="733.50" y="106.88" width="0.50" height="0.80"/><rect class="mvar" x="734.00" y="106.88" width="3.00" height="0.80"/><rect class="mfn" x="737.00" y="106.88" width="0.50" height="0.80"/><rect class="mtxt" x="737.50" y="106.88" width="0.50" height="0.80"/><rect class="mtxt" x="718.50" y="107.86" width="0.50" height="0.80"/><rect class="mfn" x="720.50" y="108.84" width="3.00" height="0.80"/><rect class="mfn" x="723.50" y="108.84" width="0.50" height="0.80"/><rect class="mvar" x="724.00" y="108.84" width="2.50" height="0.80"/><rect class="mfn" x="726.50" y="108.84" width="0.50" height="0.80"/><rect class="mtxt" x="720.50" y="109.82" width="2.50" height="0.80"/><rect class="mtxt" x="723.00" y="109.82" width="0.50" height="0.80"/><rect class="mtxt" x="723.50" y="109.82" width="3.00" height="0.80"/><rect class="mtxt" x="726.50" y="109.82" width="0.50" height="0.80"/><rect class="mtxt" x="727.00" y="109.82" width="0.50" height="0.80"/><rect class="mfn" x="720.50" y="111.78" width="4.50" height="0.80"/><rect class="mfn" x="725.00" y="111.78" width="0.50" height="0.80"/><rect class="mvar" x="725.50" y="111.78" width="5.50" height="0.80"/><rect class="mfn" x="731.00" y="111.78" width="0.50" height="0.80"/><rect class="mfn" x="720.50" y="112.76" width="3.00" height="0.80"/><rect class="mfn" x="723.50" y="112.76" width="0.50" height="0.80"/><rect class="mvar" x="724.00" y="112.76" width="2.50" height="0.80"/><rect class="mfn" x="726.50" y="112.76" width="0.50" height="0.80"/><rect class="mfn" x="720.50" y="113.74" width="4.50" height="0.80"/><rect class="mfn" x="725.00" y="113.74" width="0.50" height="0.80"/><rect class="mnum" x="725.50" y="113.74" width="0.50" height="0.80"/><rect class="mnum" x="726.00" y="113.74" width="0.50" height="0.80"/><rect class="mtxt" x="726.50" y="113.74" width="0.50" height="0.80"/><rect class="mnum" x="727.00" y="113.74" width="0.50" height="0.80"/><rect class="mtxt" x="727.50" y="113.74" width="0.50" height="0.80"/><rect class="mvar" x="728.00" y="113.74" width="8.00" height="0.80"/><rect class="mvar" x="736.00" y="113.74" width="0.50" height="0.80"/><rect class="mvar" x="736.50" y="113.74" width="6.50" height="0.80"/><rect class="mvar" x="743.00" y="113.74" width="0.50" height="0.80"/><rect class="mvar" x="743.50" y="113.74" width="6.50" height="0.80"/><rect class="mvar" x="750.00" y="113.74" width="0.50" height="0.80"/><rect class="mvar" x="722.50" y="114.72" width="9.00" height="0.80"/><rect class="mnum" x="731.50" y="114.72" width="0.50" height="0.80"/><rect class="mnum" x="732.00" y="114.72" width="0.50" height="0.80"/><rect class="mnum" x="732.50" y="114.72" width="0.50" height="0.80"/><rect class="mfn" x="733.00" y="114.72" width="0.50" height="0.80"/><rect class="mtxt" x="720.50" y="115.70" width="4.00" height="0.80"/><rect class="mtxt" x="724.50" y="115.70" width="0.50" height="0.80"/><rect class="mtxt" x="725.00" y="115.70" width="3.00" height="0.80"/><rect class="mtxt" x="728.00" y="115.70" width="0.50" height="0.80"/><rect class="mtxt" x="728.50" y="115.70" width="3.00" height="0.80"/><rect class="mtxt" x="731.50" y="115.70" width="0.50" height="0.80"/><rect class="mtxt" x="732.00" y="115.70" width="0.50" height="0.80"/><rect class="mtxt" x="718.50" y="116.68" width="0.50" height="0.80"/><rect class="mfn" x="718.50" y="118.64" width="4.50" height="0.80"/><rect class="mfn" x="723.00" y="118.64" width="0.50" height="0.80"/><rect class="mvar" x="723.50" y="118.64" width="5.50" height="0.80"/><rect class="mfn" x="729.00" y="118.64" width="0.50" height="0.80"/><rect class="mfn" x="718.50" y="119.62" width="4.50" height="0.80"/><rect class="mfn" x="723.00" y="119.62" width="0.50" height="0.80"/><rect class="mnum" x="723.50" y="119.62" width="0.50" height="0.80"/><rect class="mnum" x="724.00" y="119.62" width="0.50" height="0.80"/><rect class="mtxt" x="724.50" y="119.62" width="0.50" height="0.80"/><rect class="mnum" x="725.50" y="119.62" width="0.50" height="0.80"/><rect class="mtxt" x="726.00" y="119.62" width="0.50" height="0.80"/><rect class="mvar" x="727.00" y="119.62" width="8.00" height="0.80"/><rect class="mvar" x="735.00" y="119.62" width="0.50" height="0.80"/><rect class="mvar" x="735.50" y="119.62" width="6.50" height="0.80"/><rect class="mvar" x="742.00" y="119.62" width="0.50" height="0.80"/><rect class="mvar" x="742.50" y="119.62" width="6.50" height="0.80"/><rect class="mnum" x="749.00" y="119.62" width="0.50" height="0.80"/><rect class="mfn" x="749.50" y="119.62" width="0.50" height="0.80"/><rect class="mfn" x="718.50" y="120.60" width="3.00" height="0.80"/><rect class="mfn" x="721.50" y="120.60" width="0.50" height="0.80"/><rect class="mnum" x="722.00" y="120.60" width="0.50" height="0.80"/><rect class="mnum" x="722.50" y="120.60" width="0.50" height="0.80"/><rect class="mtxt" x="723.00" y="120.60" width="0.50" height="0.80"/><rect class="mnum" x="724.00" y="120.60" width="0.50" height="0.80"/><rect class="mtxt" x="724.50" y="120.60" width="0.50" height="0.80"/><rect class="mnum" x="725.50" y="120.60" width="1.00" height="0.80"/><rect class="mnum" x="726.50" y="120.60" width="0.50" height="0.80"/><rect class="mfn" x="727.00" y="120.60" width="0.50" height="0.80"/><rect class="mkw" x="718.50" y="121.58" width="1.00" height="0.80"/><rect class="mtxt" x="720.00" y="121.58" width="0.50" height="0.80"/><rect class="mkw" x="720.50" y="121.58" width="1.50" height="0.80"/><rect class="mvar" x="722.00" y="121.58" width="2.50" height="0.80"/><rect class="mtxt" x="724.50" y="121.58" width="0.50" height="0.80"/><rect class="mkw" x="725.50" y="121.58" width="3.00" height="0.80"/><rect class="mtxt" x="729.00" y="121.58" width="0.50" height="0.80"/><rect class="mstr_" x="729.50" y="121.58" width="7.00" height="0.80"/><rect class="mtxt" x="736.50" y="121.58" width="0.50" height="0.80"/><rect class="mtxt" x="737.00" y="121.58" width="0.50" height="0.80"/><rect class="mtxt" x="738.00" y="121.58" width="2.00" height="0.80"/><rect class="mtxt" x="740.50" y="121.58" width="4.00" height="0.80"/><rect class="mtxt" x="744.50" y="121.58" width="0.50" height="0.80"/><rect class="mtxt" x="745.00" y="121.58" width="0.50" height="0.80"/><rect class="mtxt" x="745.50" y="121.58" width="0.50" height="0.80"/><rect class="mkw" x="718.50" y="123.54" width="0.50" height="0.80"/><rect class="mfn" x="719.50" y="123.54" width="4.50" height="0.80"/><rect class="mfn" x="724.00" y="123.54" width="0.50" height="0.80"/><rect class="mnum" x="724.50" y="123.54" width="0.50" height="0.80"/><rect class="mnum" x="725.00" y="123.54" width="0.50" height="0.80"/><rect class="mtxt" x="725.50" y="123.54" width="0.50" height="0.80"/><rect class="mnum" x="726.50" y="123.54" width="0.50" height="0.80"/><rect class="mtxt" x="727.00" y="123.54" width="0.50" height="0.80"/><rect class="mvar" x="728.00" y="123.54" width="8.00" height="0.80"/><rect class="mvar" x="736.00" y="123.54" width="0.50" height="0.80"/><rect class="mvar" x="736.50" y="123.54" width="6.50" height="0.80"/><rect class="mnum" x="743.00" y="123.54" width="0.50" height="0.80"/><rect class="mnum" x="743.50" y="123.54" width="0.50" height="0.80"/><rect class="mnum" x="744.00" y="123.54" width="0.50" height="0.80"/><rect class="mfn" x="744.50" y="123.54" width="0.50" height="0.80"/><rect class="mfn" x="718.50" y="124.52" width="4.00" height="0.80"/><rect class="mfn" x="722.50" y="124.52" width="0.50" height="0.80"/><rect class="mvar" x="723.00" y="124.52" width="0.50" height="0.80"/><rect class="mvar" x="723.50" y="124.52" width="0.50" height="0.80"/><rect class="mtxt" x="724.00" y="124.52" width="0.50" height="0.80"/><rect class="mtxt" x="724.50" y="124.52" width="6.00" height="0.80"/><rect class="mnum" x="730.50" y="124.52" width="0.50" height="0.80"/><rect class="mnum" x="731.00" y="124.52" width="0.50" height="0.80"/><rect class="mnum" x="731.50" y="124.52" width="0.50" height="0.80"/><rect class="mnum" x="732.00" y="124.52" width="0.50" height="0.80"/><rect class="mtxt" x="732.50" y="124.52" width="0.50" height="0.80"/><rect class="mvar" x="733.00" y="124.52" width="0.50" height="0.80"/><rect class="mfn" x="733.50" y="124.52" width="1.50" height="0.80"/><rect class="mfn" x="735.00" y="124.52" width="0.50" height="0.80"/><rect class="mnum" x="735.50" y="124.52" width="1.00" height="0.80"/><rect class="mfn" x="736.50" y="124.52" width="0.50" height="0.80"/><rect class="mtxt" x="737.00" y="124.52" width="0.50" height="0.80"/><rect class="mvar" x="738.00" y="124.52" width="0.50" height="0.80"/><rect class="mvar" x="738.50" y="124.52" width="0.50" height="0.80"/><rect class="mvar" x="739.00" y="124.52" width="6.50" height="0.80"/><rect class="mtxt" x="745.50" y="124.52" width="0.50" height="0.80"/><rect class="mvar" x="746.50" y="124.52" width="3.00" height="0.80"/><rect class="mvar" x="749.50" y="124.52" width="0.50" height="0.80"/><rect class="mvar" x="750.00" y="124.52" width="2.00" height="0.80"/><rect class="mtxt" x="752.00" y="124.52" width="0.50" height="0.80"/><rect class="mvar" x="753.00" y="124.52" width="1.50" height="0.80"/><rect class="mvar" x="754.50" y="124.52" width="0.50" height="0.80"/><rect class="mnum" x="755.00" y="124.52" width="0.50" height="0.80"/><rect class="mfn" x="755.50" y="124.52" width="0.50" height="0.80"/><rect class="mtxt" x="756.00" y="124.52" width="0.50" height="0.80"/><rect class="mfn" x="720.50" y="125.50" width="4.50" height="0.80"/><rect class="mfn" x="725.00" y="125.50" width="0.50" height="0.80"/><rect class="mnum" x="725.50" y="125.50" width="0.50" height="0.80"/><rect class="mnum" x="726.00" y="125.50" width="0.50" height="0.80"/><rect class="mtxt" x="726.50" y="125.50" width="0.50" height="0.80"/><rect class="mnum" x="727.50" y="125.50" width="0.50" height="0.80"/><rect class="mtxt" x="728.00" y="125.50" width="0.50" height="0.80"/><rect class="mvar" x="729.00" y="125.50" width="8.00" height="0.80"/><rect class="mvar" x="737.00" y="125.50" width="0.50" height="0.80"/><rect class="mvar" x="737.50" y="125.50" width="6.50" height="0.80"/><rect class="mvar" x="744.00" y="125.50" width="0.50" height="0.80"/><rect class="mvar" x="744.50" y="125.50" width="6.50" height="0.80"/><rect class="mnum" x="751.00" y="125.50" width="0.50" height="0.80"/><rect class="mfn" x="751.50" y="125.50" width="0.50" height="0.80"/><rect class="mfn" x="720.50" y="126.48" width="3.00" height="0.80"/><rect class="mfn" x="723.50" y="126.48" width="0.50" height="0.80"/><rect class="mnum" x="724.00" y="126.48" width="0.50" height="0.80"/><rect class="mnum" x="724.50" y="126.48" width="0.50" height="0.80"/><rect class="mtxt" x="725.00" y="126.48" width="0.50" height="0.80"/><rect class="mnum" x="726.00" y="126.48" width="0.50" height="0.80"/><rect class="mtxt" x="726.50" y="126.48" width="0.50" height="0.80"/><rect class="mnum" x="727.50" y="126.48" width="1.00" height="0.80"/><rect class="mnum" x="728.50" y="126.48" width="0.50" height="0.80"/><rect class="mfn" x="729.00" y="126.48" width="0.50" height="0.80"/><rect class="mkw" x="720.50" y="127.46" width="1.00" height="0.80"/><rect class="mtxt" x="722.00" y="127.46" width="0.50" height="0.80"/><rect class="mkw" x="722.50" y="127.46" width="1.50" height="0.80"/><rect class="mvar" x="724.00" y="127.46" width="2.50" height="0.80"/><rect class="mtxt" x="726.50" y="127.46" width="0.50" height="0.80"/><rect class="mkw" x="727.50" y="127.46" width="3.00" height="0.80"/><rect class="mtxt" x="731.00" y="127.46" width="0.50" height="0.80"/><rect class="mstr_" x="731.50" y="127.46" width="4.50" height="0.80"/><rect class="mtxt" x="736.00" y="127.46" width="0.50" height="0.80"/><rect class="mtxt" x="736.50" y="127.46" width="0.50" height="0.80"/><rect class="mtxt" x="737.50" y="127.46" width="2.00" height="0.80"/><rect class="mfn" x="740.00" y="127.46" width="3.00" height="0.80"/><rect class="mfn" x="743.00" y="127.46" width="0.50" height="0.80"/><rect class="mfn" x="743.50" y="127.46" width="0.50" height="0.80"/><rect class="mtxt" x="744.50" y="127.46" width="1.50" height="0.80"/><rect class="mtxt" x="746.00" y="127.46" width="0.50" height="0.80"/><rect class="mtxt" x="746.50" y="127.46" width="0.50" height="0.80"/><rect class="mtxt" x="747.00" y="127.46" width="0.50" height="0.80"/><rect class="mfn" x="718.50" y="128.44" width="4.50" height="0.80"/><rect class="mfn" x="723.00" y="128.44" width="0.50" height="0.80"/><rect class="mnum" x="723.50" y="128.44" width="0.50" height="0.80"/><rect class="mnum" x="724.00" y="128.44" width="0.50" height="0.80"/><rect class="mtxt" x="724.50" y="128.44" width="0.50" height="0.80"/><rect class="mnum" x="725.50" y="128.44" width="0.50" height="0.80"/><rect class="mtxt" x="726.00" y="128.44" width="0.50" height="0.80"/><rect class="mvar" x="727.00" y="128.44" width="8.00" height="0.80"/><rect class="mvar" x="735.00" y="128.44" width="0.50" height="0.80"/><rect class="mvar" x="735.50" y="128.44" width="6.50" height="0.80"/><rect class="mvar" x="742.00" y="128.44" width="0.50" height="0.80"/><rect class="mvar" x="742.50" y="128.44" width="6.50" height="0.80"/><rect class="mnum" x="749.00" y="128.44" width="0.50" height="0.80"/><rect class="mnum" x="749.50" y="128.44" width="0.50" height="0.80"/><rect class="mvar" x="750.00" y="128.44" width="0.50" height="0.80"/><rect class="mvar" x="750.50" y="128.44" width="1.00" height="0.80"/><rect class="mnum" x="751.50" y="128.44" width="0.50" height="0.80"/><rect class="mfn" x="752.00" y="128.44" width="0.50" height="0.80"/><rect class="mfn" x="718.50" y="129.42" width="3.00" height="0.80"/><rect class="mfn" x="721.50" y="129.42" width="0.50" height="0.80"/><rect class="mnum" x="722.00" y="129.42" width="0.50" height="0.80"/><rect class="mnum" x="722.50" y="129.42" width="0.50" height="0.80"/><rect class="mtxt" x="723.00" y="129.42" width="0.50" height="0.80"/><rect class="mnum" x="724.00" y="129.42" width="0.50" height="0.80"/><rect class="mtxt" x="724.50" y="129.42" width="0.50" height="0.80"/><rect class="mnum" x="725.50" y="129.42" width="1.00" height="0.80"/><rect class="mnum" x="726.50" y="129.42" width="0.50" height="0.80"/><rect class="mfn" x="727.00" y="129.42" width="0.50" height="0.80"/><rect class="mtxt" x="728.00" y="129.42" width="4.00" height="0.80"/><rect class="mtxt" x="732.00" y="129.42" width="0.50" height="0.80"/><rect class="mtxt" x="732.50" y="129.42" width="3.00" height="0.80"/><rect class="mtxt" x="735.50" y="129.42" width="0.50" height="0.80"/><rect class="mtxt" x="736.00" y="129.42" width="0.50" height="0.80"/><rect class="mtxt" x="716.50" y="130.40" width="0.50" height="0.80"/><rect class="mtxt" x="716.50" y="131.38" width="3.50" height="0.80"/><rect class="mtxt" x="720.00" y="131.38" width="0.50" height="0.80"/><rect class="mtxt" x="720.50" y="131.38" width="3.00" height="0.80"/><rect class="mtxt" x="723.50" y="131.38" width="0.50" height="0.80"/><rect class="mnum" x="724.50" y="131.38" width="0.50" height="0.80"/><rect class="mtxt" x="725.00" y="131.38" width="0.50" height="0.80"/><rect class="mnum" x="726.00" y="131.38" width="0.50" height="0.80"/><rect class="mtxt" x="726.50" y="131.38" width="0.50" height="0.80"/><rect class="mtxt" x="727.00" y="131.38" width="0.50" height="0.80"/><rect class="mfn" x="716.50" y="132.36" width="4.50" height="0.80"/><rect class="mfn" x="721.00" y="132.36" width="0.50" height="0.80"/><rect class="mvar" x="721.50" y="132.36" width="5.50" height="0.80"/><rect class="mfn" x="727.00" y="132.36" width="0.50" height="0.80"/><rect class="mfn" x="728.00" y="132.36" width="3.00" height="0.80"/><rect class="mfn" x="731.00" y="132.36" width="0.50" height="0.80"/><rect class="mnum" x="731.50" y="132.36" width="0.50" height="0.80"/><rect class="mnum" x="732.00" y="132.36" width="0.50" height="0.80"/><rect class="mtxt" x="732.50" y="132.36" width="0.50" height="0.80"/><rect class="mnum" x="733.50" y="132.36" width="0.50" height="0.80"/><rect class="mtxt" x="734.00" y="132.36" width="0.50" height="0.80"/><rect class="mnum" x="735.00" y="132.36" width="1.00" height="0.80"/><rect class="mnum" x="736.00" y="132.36" width="0.50" height="0.80"/><rect class="mfn" x="736.50" y="132.36" width="0.50" height="0.80"/><rect class="mtxt" x="737.50" y="132.36" width="9.00" height="0.80"/><rect class="mtxt" x="746.50" y="132.36" width="0.50" height="0.80"/><rect class="mnum" x="747.00" y="132.36" width="0.50" height="0.80"/><rect class="mtxt" x="747.50" y="132.36" width="0.50" height="0.80"/><rect class="mtxt" x="748.00" y="132.36" width="0.50" height="0.80"/><rect class="mkw" x="716.50" y="133.34" width="1.00" height="0.80"/><rect class="mtxt" x="718.00" y="133.34" width="0.50" height="0.80"/><rect class="mkw" x="718.50" y="133.34" width="1.50" height="0.80"/><rect class="mvar" x="720.00" y="133.34" width="2.50" height="0.80"/><rect class="mtxt" x="722.50" y="133.34" width="0.50" height="0.80"/><rect class="mkw" x="723.50" y="133.34" width="3.00" height="0.80"/><rect class="mtxt" x="727.00" y="133.34" width="0.50" height="0.80"/><rect class="mstr_" x="727.50" y="133.34" width="4.50" height="0.80"/><rect class="mtxt" x="732.00" y="133.34" width="0.50" height="0.80"/><rect class="mtxt" x="732.50" y="133.34" width="0.50" height="0.80"/><rect class="mtxt" x="733.50" y="133.34" width="2.00" height="0.80"/><rect class="mfn" x="736.00" y="133.34" width="3.00" height="0.80"/><rect class="mfn" x="739.00" y="133.34" width="0.50" height="0.80"/><rect class="mfn" x="739.50" y="133.34" width="0.50" height="0.80"/><rect class="mtxt" x="740.50" y="133.34" width="1.50" height="0.80"/><rect class="mtxt" x="742.00" y="133.34" width="0.50" height="0.80"/><rect class="mtxt" x="742.50" y="133.34" width="0.50" height="0.80"/><rect class="mtxt" x="743.00" y="133.34" width="0.50" height="0.80"/><rect class="mfn" x="716.50" y="135.30" width="4.00" height="0.80"/><rect class="mfn" x="720.50" y="135.30" width="0.50" height="0.80"/><rect class="mvar" x="721.00" y="135.30" width="0.50" height="0.80"/><rect class="mvar" x="721.50" y="135.30" width="0.50" height="0.80"/><rect class="mtxt" x="722.00" y="135.30" width="0.50" height="0.80"/><rect class="mtxt" x="722.50" y="135.30" width="6.00" height="0.80"/><rect class="mnum" x="728.50" y="135.30" width="0.50" height="0.80"/><rect class="mnum" x="729.00" y="135.30" width="0.50" height="0.80"/><rect class="mnum" x="729.50" y="135.30" width="0.50" height="0.80"/><rect class="mnum" x="730.00" y="135.30" width="0.50" height="0.80"/><rect class="mtxt" x="730.50" y="135.30" width="0.50" height="0.80"/><rect class="mvar" x="731.00" y="135.30" width="0.50" height="0.80"/><rect class="mfn" x="731.50" y="135.30" width="1.50" height="0.80"/><rect class="mfn" x="733.00" y="135.30" width="0.50" height="0.80"/><rect class="mnum" x="733.50" y="135.30" width="1.00" height="0.80"/><rect class="mfn" x="734.50" y="135.30" width="0.50" height="0.80"/><rect class="mtxt" x="735.00" y="135.30" width="0.50" height="0.80"/><rect class="mvar" x="736.00" y="135.30" width="0.50" height="0.80"/><rect class="mvar" x="736.50" y="135.30" width="0.50" height="0.80"/><rect class="mvar" x="737.00" y="135.30" width="1.50" height="0.80"/><rect class="mtxt" x="738.50" y="135.30" width="0.50" height="0.80"/><rect class="mvar" x="739.50" y="135.30" width="3.00" height="0.80"/><rect class="mvar" x="742.50" y="135.30" width="0.50" height="0.80"/><rect class="mvar" x="743.00" y="135.30" width="2.00" height="0.80"/><rect class="mfn" x="745.00" y="135.30" width="0.50" height="0.80"/><rect class="mtxt" x="745.50" y="135.30" width="0.50" height="0.80"/><rect class="mkw" x="716.50" y="136.28" width="0.50" height="0.80"/><rect class="mfn" x="717.50" y="136.28" width="4.50" height="0.80"/><rect class="mfn" x="722.00" y="136.28" width="0.50" height="0.80"/><rect class="mnum" x="722.50" y="136.28" width="0.50" height="0.80"/><rect class="mnum" x="723.00" y="136.28" width="0.50" height="0.80"/><rect class="mtxt" x="723.50" y="136.28" width="0.50" height="0.80"/><rect class="mnum" x="724.50" y="136.28" width="0.50" height="0.80"/><rect class="mtxt" x="725.00" y="136.28" width="0.50" height="0.80"/><rect class="mnum" x="726.00" y="136.28" width="0.50" height="0.80"/><rect class="mnum" x="726.50" y="136.28" width="0.50" height="0.80"/><rect class="mfn" x="727.00" y="136.28" width="0.50" height="0.80"/><rect class="mfn" x="728.00" y="136.28" width="2.00" height="0.80"/><rect class="mfn" x="730.00" y="136.28" width="0.50" height="0.80"/><rect class="mnum" x="730.50" y="136.28" width="0.50" height="0.80"/><rect class="mnum" x="731.00" y="136.28" width="1.50" height="0.80"/><rect class="mtxt" x="732.50" y="136.28" width="0.50" height="0.80"/><rect class="mnum" x="733.50" y="136.28" width="1.50" height="0.80"/><rect class="mtxt" x="735.00" y="136.28" width="0.50" height="0.80"/><rect class="mnum" x="736.00" y="136.28" width="1.00" height="0.80"/><rect class="mnum" x="737.00" y="136.28" width="0.50" height="0.80"/><rect class="mtxt" x="737.50" y="136.28" width="0.50" height="0.80"/><rect class="mvar" x="738.50" y="136.28" width="3.00" height="0.80"/><rect class="mvar" x="741.50" y="136.28" width="0.50" height="0.80"/><rect class="mvar" x="742.00" y="136.28" width="2.00" height="0.80"/><rect class="mfn" x="744.00" y="136.28" width="0.50" height="0.80"/><rect class="mtxt" x="744.50" y="136.28" width="0.50" height="0.80"/><rect class="mcom" x="716.50" y="137.26" width="1.00" height="0.80"/><rect class="mcom" x="718.00" y="137.26" width="2.50" height="0.80"/><rect class="mcom" x="721.00" y="137.26" width="4.00" height="0.80"/><rect class="mkw" x="716.50" y="138.24" width="0.50" height="0.80"/><rect class="mfn" x="717.50" y="138.24" width="4.50" height="0.80"/><rect class="mfn" x="722.00" y="138.24" width="0.50" height="0.80"/><rect class="mnum" x="722.50" y="138.24" width="0.50" height="0.80"/><rect class="mnum" x="723.00" y="138.24" width="0.50" height="0.80"/><rect class="mtxt" x="723.50" y="138.24" width="0.50" height="0.80"/><rect class="mnum" x="724.50" y="138.24" width="0.50" height="0.80"/><rect class="mtxt" x="725.00" y="138.24" width="0.50" height="0.80"/><rect class="mnum" x="726.00" y="138.24" width="0.50" height="0.80"/><rect class="mnum" x="726.50" y="138.24" width="0.50" height="0.80"/><rect class="mfn" x="727.00" y="138.24" width="0.50" height="0.80"/><rect class="mfn" x="728.00" y="138.24" width="2.00" height="0.80"/><rect class="mfn" x="730.00" y="138.24" width="0.50" height="0.80"/><rect class="mnum" x="730.50" y="138.24" width="0.50" height="0.80"/><rect class="mnum" x="731.00" y="138.24" width="1.00" height="0.80"/><rect class="mtxt" x="732.00" y="138.24" width="0.50" height="0.80"/><rect class="mnum" x="733.00" y="138.24" width="1.00" height="0.80"/><rect class="mtxt" x="734.00" y="138.24" width="0.50" height="0.80"/><rect class="mnum" x="735.00" y="138.24" width="1.00" height="0.80"/><rect class="mnum" x="736.00" y="138.24" width="0.50" height="0.80"/><rect class="mfn" x="736.50" y="138.24" width="0.50" height="0.80"/><rect class="mtxt" x="737.00" y="138.24" width="0.50" height="0.80"/></svg><div id="sb"></div><div style="position:absolute;left:0;top:0;width:1.3px;height:599px;background:#3a3a38"></div><div id="thumb"></div>
<div id="status"><span style="position:absolute;left:3px">Line 1, Column 1</span><span style="position:absolute;left:705px">Tab Size: 4</span><span style="position:absolute;left:758px">OpenSCAD</span></div>
</body></html>
